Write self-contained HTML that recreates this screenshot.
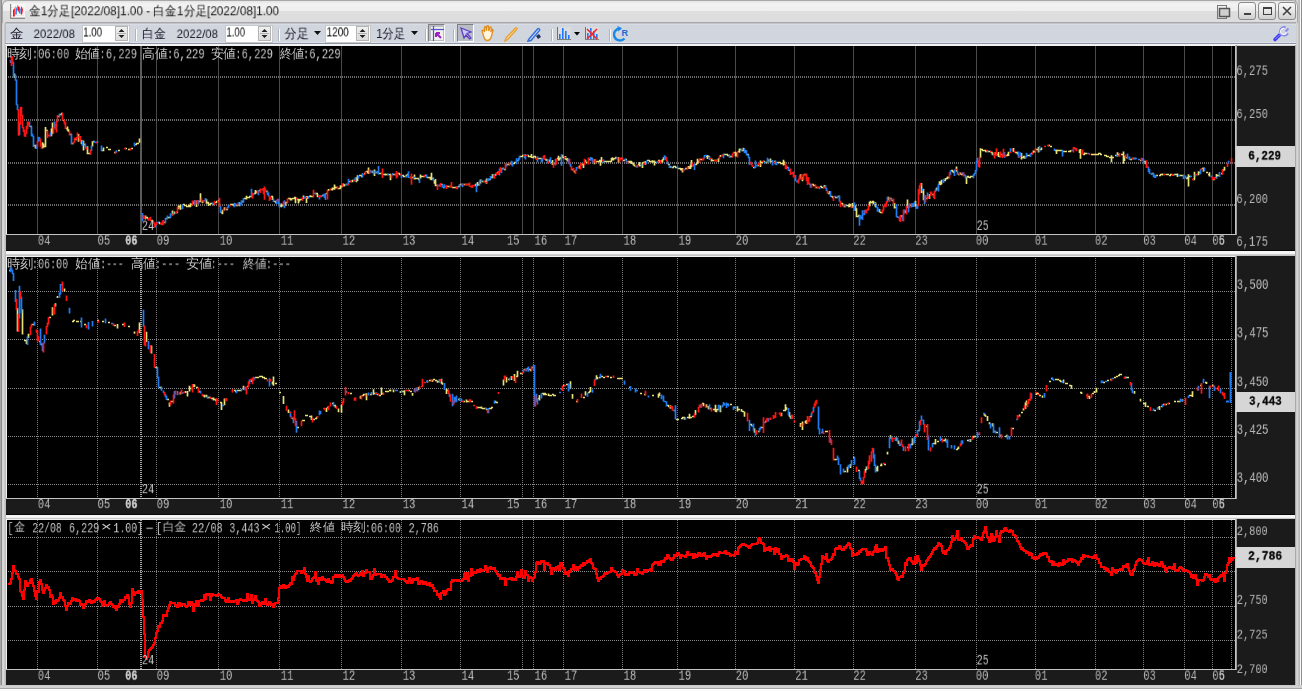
<!DOCTYPE html><html><head><meta charset="utf-8"><style>
*{margin:0;padding:0;box-sizing:border-box}
html,body{width:1302px;height:691px;overflow:hidden;background:#d6d6d6;font-family:"Liberation Sans",sans-serif}
.a{position:absolute}
.m{position:absolute;font-family:"Liberation Mono",monospace;font-size:13px;line-height:13px;white-space:pre;transform:scaleX(0.77);transform-origin:0 0;color:#c8c8c8}
.j{position:absolute;font-size:12px;line-height:12px;white-space:pre;color:#c8c8c8}
.t{position:absolute;font-size:13px;line-height:14px;white-space:pre;color:#101010}
</style></head><body>
<div class="a" style="left:0;top:0;width:1302px;height:691px;background:#d4d4d4"></div>
<div class="a" style="left:0px;top:0;width:1px;height:691px;background:#a8a8a8"></div>
<div class="a" style="left:1px;top:0;width:1px;height:691px;background:#8c8c8c"></div>
<div class="a" style="left:2px;top:0;width:1px;height:691px;background:#d4d4d4"></div>
<div class="a" style="left:3px;top:0;width:1px;height:691px;background:#dadada"></div>
<div class="a" style="left:4px;top:0;width:1px;height:691px;background:#c8c8c8"></div>
<div class="a" style="left:5px;top:0;width:1px;height:691px;background:#bcbcbc"></div>
<div class="a" style="left:1295px;top:0;width:1px;height:691px;background:#a8a8a8"></div>
<div class="a" style="left:1296px;top:0;width:1px;height:691px;background:#d0d0d0"></div>
<div class="a" style="left:1297px;top:0;width:1px;height:691px;background:#d4d4d4"></div>
<div class="a" style="left:1298px;top:0;width:1px;height:691px;background:#c4c4c4"></div>
<div class="a" style="left:1299px;top:0;width:1px;height:691px;background:#b8b8b8"></div>
<div class="a" style="left:1300px;top:0;width:1px;height:691px;background:#fafafa"></div>
<div class="a" style="left:1301px;top:0;width:1px;height:691px;background:#8c8c8c"></div>
<div class="a" style="left:0;top:685px;width:1302px;height:1px;background:#c8c8c8"></div>
<div class="a" style="left:0;top:686px;width:1302px;height:1px;background:#d2d2d2"></div>
<div class="a" style="left:0;top:687px;width:1302px;height:1px;background:#d0d0d0"></div>
<div class="a" style="left:0;top:688px;width:1302px;height:1px;background:#a4a4a4"></div>
<div class="a" style="left:0;top:689px;width:1302px;height:1px;background:#fbfbfb"></div>
<div class="a" style="left:0;top:690px;width:1302px;height:1px;background:#fbfbfb"></div>
<div class="a" style="left:2px;top:0;width:1296px;height:23px;background:linear-gradient(#e4e4e4 0px,#f2f2f2 3px,#efefef 9.5px,#dedede 10.5px,#dcdcdc 22px);border-top-left-radius:6px;border-top-right-radius:6px;border:1px solid #a8a8a8;border-bottom:none"></div>
<svg class="a" style="left:10px;top:4px" width="15" height="15" viewBox="0 0 15 15">
<rect x="0" y="0" width="15" height="14" fill="#f8f8f8"/>
<rect x="1" y="3" width="13" height="0.6" fill="#d8e0e8"/><rect x="1" y="7" width="13" height="0.6" fill="#d8e0e8"/><rect x="1" y="11" width="13" height="0.6" fill="#d8e0e8"/>
<rect x="0" y="0" width="1.2" height="15" fill="#8a8a8a"/><rect x="0" y="13.6" width="15" height="1.4" fill="#8a8a8a"/>
<path d="M3 12.5 L3 6 L4.8 4 L4.8 12.5Z" fill="#ff1010"/><path d="M5.2 10.5 L5.6 2 L7 4.5 L6.8 10.5Z" fill="#1f7fff"/>
<path d="M7.2 6 L7.6 0.8 L9.2 3.5 L9 8Z" fill="#ff1010"/><path d="M8.8 9 L9.2 2.5 L10.8 5 L10.4 10Z" fill="#1f7fff"/>
<path d="M10.8 10.5 L11.2 2 L13 5.5 L12.2 10.5Z" fill="#ff1010"/>
</svg>
<svg class="a" style="left:1215px;top:3px" width="17" height="17" viewBox="0 0 17 17">
<rect x="2.5" y="2.5" width="9" height="13" fill="none" stroke="#777" stroke-width="1"/>
<rect x="4.5" y="5.5" width="10" height="8" fill="#d0d0d0" stroke="#555" stroke-width="1.5"/>
</svg>
<div class="a" style="left:1238px;top:2px;width:18px;height:18px;border:1px solid #8a8a8a;border-radius:3px;background:linear-gradient(#fafafa,#e6e6e6 50%,#d0d0d0)"></div>
<div class="a" style="left:1258px;top:2px;width:18px;height:18px;border:1px solid #8a8a8a;border-radius:3px;background:linear-gradient(#fafafa,#e6e6e6 50%,#d0d0d0)"></div>
<div class="a" style="left:1278px;top:2px;width:18px;height:18px;border:1px solid #8a8a8a;border-radius:3px;background:linear-gradient(#fafafa,#e6e6e6 50%,#d0d0d0)"></div>
<div class="a" style="left:1244px;top:13px;width:7px;height:2px;background:#404040"></div>
<div class="a" style="left:1263px;top:7px;width:9px;height:8px;border:1.5px solid #404040;border-top-width:2.5px"></div>
<svg class="a" style="left:1281px;top:5px" width="12" height="12" viewBox="0 0 12 12"><path d="M2 2 L10 10 M10 2 L2 10" stroke="#404040" stroke-width="1.6"/></svg>
<div class="a" style="left:5px;top:22px;width:1291px;height:22px;background:linear-gradient(#a8a8a8 0px,#a8a8a8 1px,#c0c3c8 1px,#c0c3c8 2px,#d8dce4 2px,#d8dce4 3px,#d1d5dd 3px,#d1d5dd 20px,#dfe2e8 20px);border-left:1px solid #b8bcc4"></div>
<div class="a" style="left:5px;top:43px;width:1291px;height:1px;background:#8c96a6"></div>
<div class="a" style="left:5px;top:44px;width:1291px;height:1px;background:#f4f4f4"></div>
<div class="a" style="left:82px;top:25px;width:48px;height:18px;background:#fff;border:1px solid #c8c8c8"></div>
<div class="a" style="left:115px;top:26px;width:13px;height:15px;background:linear-gradient(#f0f0f0,#dcdcdc);border:1px solid #b4b4b4"></div>
<svg class="a" style="left:115px;top:26px" width="13" height="15"><path d="M3.5 6 L6.5 3 L9.5 6Z M3.5 9 L6.5 12 L9.5 9Z" fill="#202020"/><line x1="2" y1="7.5" x2="11" y2="7.5" stroke="#b0b0b0"/></svg>
<div class="a" style="left:135px;top:29px;width:2px;height:12px;background:linear-gradient(90deg,#b0b4bc 50%,#fff 50%)"></div>
<div class="a" style="left:225px;top:25px;width:48px;height:18px;background:#fff;border:1px solid #c8c8c8"></div>
<div class="a" style="left:258px;top:26px;width:13px;height:15px;background:linear-gradient(#f0f0f0,#dcdcdc);border:1px solid #b4b4b4"></div>
<svg class="a" style="left:258px;top:26px" width="13" height="15"><path d="M3.5 6 L6.5 3 L9.5 6Z M3.5 9 L6.5 12 L9.5 9Z" fill="#202020"/><line x1="2" y1="7.5" x2="11" y2="7.5" stroke="#b0b0b0"/></svg>
<div class="a" style="left:278px;top:29px;width:2px;height:12px;background:linear-gradient(90deg,#b0b4bc 50%,#fff 50%)"></div>
<svg class="a" style="left:314px;top:31px" width="7" height="5"><path d="M0 0 L7 0 L3.5 4Z" fill="#101010"/></svg>
<div class="a" style="left:325px;top:25px;width:46px;height:18px;background:#fff;border:1px solid #c8c8c8"></div>
<div class="a" style="left:356px;top:26px;width:13px;height:15px;background:linear-gradient(#f0f0f0,#dcdcdc);border:1px solid #b4b4b4"></div>
<svg class="a" style="left:356px;top:26px" width="13" height="15"><path d="M3.5 6 L6.5 3 L9.5 6Z M3.5 9 L6.5 12 L9.5 9Z" fill="#202020"/><line x1="2" y1="7.5" x2="11" y2="7.5" stroke="#b0b0b0"/></svg>
<svg class="a" style="left:411px;top:31px" width="7" height="5"><path d="M0 0 L7 0 L3.5 4Z" fill="#101010"/></svg>
<div class="a" style="left:425px;top:29px;width:2px;height:12px;background:linear-gradient(90deg,#b0b4bc 50%,#fff 50%)"></div>
<div class="a" style="left:428px;top:24px;width:17px;height:18px;background:#b8bcc4;border-top:1px solid #808080;border-left:1px solid #808080;border-bottom:1px solid #fff;border-right:1px solid #fff"></div>
<svg class="a" style="left:430px;top:26px" width="14" height="15" viewBox="0 0 14 15">
<rect x="1" y="1" width="12" height="13" fill="#f0f0f0"/>
<line x1="3.5" y1="0" x2="3.5" y2="15" stroke="#5050d0" stroke-width="1.2"/><line x1="1" y1="3.5" x2="14" y2="3.5" stroke="#5050d0" stroke-width="1.2"/>
<path d="M6 7 L11 12 M6 7 L6 11 M6 7 L10 7" stroke="#a020c0" stroke-width="2"/>
</svg>
<div class="a" style="left:453px;top:29px;width:2px;height:12px;background:linear-gradient(90deg,#b0b4bc 50%,#fff 50%)"></div>
<div class="a" style="left:457px;top:24px;width:17px;height:18px;background:#b8bcc4;border-top:1px solid #808080;border-left:1px solid #808080;border-bottom:1px solid #fff;border-right:1px solid #fff"></div>
<svg class="a" style="left:459px;top:26px" width="14" height="15" viewBox="0 0 14 15">
<path d="M2 2 L12 6 L8 7.5 L12 12 L10.5 13 L7 9 L5 12Z" fill="#c8c8f8" stroke="#6040c0" stroke-width="1.3"/>
</svg>
<svg class="a" style="left:480px;top:25px" width="15" height="17" viewBox="0 0 15 17">
<path d="M3 9 L2 6 C2 5 3.5 5 4 6 L4.5 7 L4.5 2.5 C4.5 1.5 6 1.5 6 2.5 L6.5 6 L7 1.5 C7 0.5 8.5 0.5 8.5 1.5 L8.8 6 L9.8 2.5 C10 1.5 11.5 1.8 11.3 3 L10.8 7 L11.8 5 C12.3 4 13.5 4.5 13 5.5 L11.5 11 C11 13.5 9.5 15.5 7 15.5 C5 15.5 4 13.5 3 9Z" fill="#fff4e0" stroke="#e09020" stroke-width="1.3"/>
</svg>
<svg class="a" style="left:503px;top:25px" width="16" height="17" viewBox="0 0 16 17">
<path d="M3 13 L12.5 3 C13.2 2.3 14.5 3.3 13.8 4.2 L4.5 14.5 L2 16Z" fill="#fff0c0" stroke="#e8a030" stroke-width="1.4"/>
</svg>
<svg class="a" style="left:527px;top:25px" width="15" height="17" viewBox="0 0 15 17">
<path d="M2 14 L10.5 4 C11.3 3 13.2 4.2 12.5 5.4 L4 15.5 L1 16Z" fill="#c8dcff" stroke="#3a70d8" stroke-width="1.5"/>
<path d="M9 11 L12 9 L14 12 L11 14Z" fill="#203060"/>
</svg>
<div class="a" style="left:551px;top:29px;width:2px;height:12px;background:linear-gradient(90deg,#b0b4bc 50%,#fff 50%)"></div>
<svg class="a" style="left:557px;top:27px" width="14" height="13" viewBox="0 0 14 13">
<rect x="0" y="0" width="14" height="13" fill="#dcdcdc"/><rect x="0" y="0" width="1" height="13" fill="#707070"/><rect x="0" y="12" width="14" height="1" fill="#808080"/>
<rect x="2" y="7" width="1.6" height="5" fill="#1e78ff"/><rect x="5" y="1" width="1.6" height="11" fill="#1e78ff"/><rect x="8" y="4" width="1.6" height="8" fill="#1e78ff"/><rect x="11" y="8" width="1.6" height="4" fill="#1e78ff"/>
</svg>
<svg class="a" style="left:574px;top:32px" width="6" height="4"><path d="M0 0 L6 0 L3 3.5Z" fill="#000"/></svg>
<svg class="a" style="left:585px;top:27px" width="14" height="13" viewBox="0 0 14 13">
<rect x="0" y="0" width="14" height="13" fill="#dcdcdc"/><rect x="0" y="0" width="1" height="13" fill="#707070"/><rect x="0" y="12" width="14" height="1" fill="#808080"/>
<rect x="2" y="6" width="1.6" height="6" fill="#1e78ff"/><rect x="5" y="1" width="1.6" height="11" fill="#1e78ff"/><rect x="8" y="4" width="1.6" height="8" fill="#1e78ff"/><rect x="11" y="7" width="1.6" height="5" fill="#1e78ff"/>
<path d="M2 2 L12 12 M12 2 L2 12" stroke="#ff2020" stroke-width="1.5"/>
</svg>
<div class="a" style="left:609px;top:29px;width:2px;height:12px;background:linear-gradient(90deg,#b0b4bc 50%,#fff 50%)"></div>
<svg class="a" style="left:613px;top:25px" width="16" height="17" viewBox="0 0 16 17">
<path d="M7.5 3.5 A6 6 0 1 0 11.5 13.5" fill="none" stroke="#1a8ae8" stroke-width="2.4"/>
<path d="M4.5 1 L9 3.5 L5 6.5Z" fill="#1a8ae8"/>
<text x="8.5" y="11" font-family="Liberation Sans" font-weight="bold" font-size="9" fill="#1a6ad8">R</text>
</svg>
<svg class="a" style="left:1272px;top:22px" width="22" height="22" viewBox="0 0 22 22">
<path d="M3 17.5 L8 12.5" stroke="#3a3af0" stroke-width="3.4" stroke-linecap="round"/>
<path d="M3.5 17 L7.5 13" stroke="#9a9aff" stroke-width="1" stroke-linecap="round"/>
<path d="M8 12.5 L9.5 11" stroke="#f0f0ff" stroke-width="2.6"/>
<path d="M13.5 5.5 A4 4 0 1 0 15.8 11.2" fill="none" stroke="#8a8ae6" stroke-width="2.4"/>
<path d="M12.5 6.5 A3 3 0 1 0 14.5 10.5" fill="none" stroke="#ffffff" stroke-width="1.2"/>
<path d="M13.5 9.5 L16.5 6.5" stroke="#8a8ae6" stroke-width="1.8"/>
</svg>
<div class="a" style="left:6px;top:46px;width:1289px;height:204px;background:#1b1b1b"></div>
<div class="a" style="left:6px;top:45px;width:1229px;height:1px;background:#f0f0f0"></div>
<div class="a" style="left:6px;top:45px;width:1px;height:189px;background:#f0f0f0"></div>
<div class="a" style="left:7px;top:46px;width:1228px;height:188px;background:#000"></div>
<div class="a" style="left:6px;top:234px;width:1230px;height:1px;background:#c4c4c4"></div>
<div class="a" style="left:1235px;top:45px;width:1px;height:190px;background:#c4c4c4"></div>
<div class="a" style="left:1236px;top:45px;width:1px;height:190px;background:#9c9c9c"></div>
<div class="a" style="left:6px;top:256px;width:1289px;height:258px;background:#1b1b1b"></div>
<div class="a" style="left:6px;top:256px;width:1229px;height:1px;background:#f0f0f0"></div>
<div class="a" style="left:6px;top:256px;width:1px;height:242px;background:#f0f0f0"></div>
<div class="a" style="left:7px;top:257px;width:1228px;height:241px;background:#000"></div>
<div class="a" style="left:6px;top:498px;width:1230px;height:1px;background:#c4c4c4"></div>
<div class="a" style="left:1235px;top:256px;width:1px;height:243px;background:#c4c4c4"></div>
<div class="a" style="left:1236px;top:256px;width:1px;height:243px;background:#9c9c9c"></div>
<div class="a" style="left:6px;top:519px;width:1289px;height:166px;background:#1b1b1b"></div>
<div class="a" style="left:6px;top:519px;width:1229px;height:1px;background:#f0f0f0"></div>
<div class="a" style="left:6px;top:519px;width:1px;height:150px;background:#f0f0f0"></div>
<div class="a" style="left:7px;top:520px;width:1228px;height:149px;background:#000"></div>
<div class="a" style="left:6px;top:669px;width:1230px;height:1px;background:#c4c4c4"></div>
<div class="a" style="left:1235px;top:519px;width:1px;height:151px;background:#c4c4c4"></div>
<div class="a" style="left:1236px;top:519px;width:1px;height:151px;background:#9c9c9c"></div>
<div class="a" style="left:6px;top:250px;width:1289px;height:1px;background:#080808"></div>
<div class="a" style="left:6px;top:251px;width:1289px;height:1px;background:#f4f4f4"></div>
<div class="a" style="left:6px;top:252px;width:1289px;height:1px;background:#f6f6f6"></div>
<div class="a" style="left:6px;top:253px;width:1289px;height:1px;background:#f4f4f4"></div>
<div class="a" style="left:6px;top:254px;width:1289px;height:1px;background:#d0d0d0"></div>
<div class="a" style="left:6px;top:255px;width:1289px;height:1px;background:#c4c4c4"></div>
<div class="a" style="left:6px;top:514px;width:1289px;height:1px;background:#080808"></div>
<div class="a" style="left:6px;top:515px;width:1289px;height:1px;background:#f4f4f4"></div>
<div class="a" style="left:6px;top:516px;width:1289px;height:1px;background:#f6f6f6"></div>
<div class="a" style="left:6px;top:517px;width:1289px;height:1px;background:#f0f0f0"></div>
<div class="a" style="left:6px;top:518px;width:1289px;height:1px;background:#c8c8c8"></div>
<svg class="a" style="left:0;top:0" width="1302" height="691" viewBox="0 0 1302 691"><defs><filter id="by" x="-2%" y="-10%" width="104%" height="120%"><feGaussianBlur stdDeviation="0 0.8"/></filter></defs><g stroke="#4a4a4a" stroke-width="1" shape-rendering="crispEdges"><line x1="37.5" y1="46" x2="37.5" y2="234" stroke-dashoffset="0"/><line x1="97.5" y1="46" x2="97.5" y2="234" stroke-dashoffset="0"/><line x1="156.5" y1="46" x2="156.5" y2="234" stroke-dashoffset="0"/><line x1="218.5" y1="46" x2="218.5" y2="234" stroke-dashoffset="0"/><line x1="279.5" y1="46" x2="279.5" y2="234" stroke-dashoffset="0"/><line x1="341.5" y1="46" x2="341.5" y2="234" stroke-dashoffset="0"/><line x1="401.5" y1="46" x2="401.5" y2="234" stroke-dashoffset="0"/><line x1="460.5" y1="46" x2="460.5" y2="234" stroke-dashoffset="0"/><line x1="522.5" y1="46" x2="522.5" y2="234" stroke-dashoffset="0"/><line x1="533.5" y1="46" x2="533.5" y2="234" stroke-dashoffset="0"/><line x1="563.5" y1="46" x2="563.5" y2="234" stroke-dashoffset="0"/><line x1="622.5" y1="46" x2="622.5" y2="234" stroke-dashoffset="0"/><line x1="677.5" y1="46" x2="677.5" y2="234" stroke-dashoffset="0"/><line x1="735.5" y1="46" x2="735.5" y2="234" stroke-dashoffset="0"/><line x1="794.5" y1="46" x2="794.5" y2="234" stroke-dashoffset="0"/><line x1="853.5" y1="46" x2="853.5" y2="234" stroke-dashoffset="0"/><line x1="915.5" y1="46" x2="915.5" y2="234" stroke-dashoffset="0"/><line x1="976.5" y1="46" x2="976.5" y2="234" stroke-dashoffset="0"/><line x1="1035.5" y1="46" x2="1035.5" y2="234" stroke-dashoffset="0"/><line x1="1095.5" y1="46" x2="1095.5" y2="234" stroke-dashoffset="0"/><line x1="1143.5" y1="46" x2="1143.5" y2="234" stroke-dashoffset="0"/><line x1="1184.5" y1="46" x2="1184.5" y2="234" stroke-dashoffset="0"/><line x1="1212.5" y1="46" x2="1212.5" y2="234" stroke-dashoffset="0"/><line x1="1231.5" y1="46" x2="1231.5" y2="234" stroke-dashoffset="0"/></g><g stroke="#5a5a5a" stroke-width="1" shape-rendering="crispEdges"><line x1="140.5" y1="46" x2="140.5" y2="234" stroke-dashoffset="0"/><line x1="141.5" y1="46" x2="141.5" y2="234" stroke-dashoffset="0"/></g><g stroke="#6c6c6c" stroke-width="2" stroke-dasharray="1 1" stroke-dashoffset="1" shape-rendering="crispEdges"><line x1="7" y1="77" x2="1235" y2="77"/><line x1="7" y1="120" x2="1235" y2="120"/><line x1="7" y1="163" x2="1235" y2="163"/><line x1="7" y1="205" x2="1235" y2="205"/></g><path d="M14.5 73.6V77.9M30 126.5h2M34 145.5h2M35.5 145.5V148.6M42.5 142.3V148.6M43.5 143.4V147.8M44 146.5h2M45.5 127.0V147.2M46 130.5h2M51.5 128.5V136.3M52.5 122.4V133.7M58 116.5h2M60 114.5h2M61 113.5h2M63 120.5h2M66 128.5h2M67.5 126.4V130.8M68.5 129.2V131.9M70 134.5h2M72 143.5h2M75 139.5h2M78.5 133.9V141.7M81.5 140.0V144.3M83.5 140.5V150.6M84 144.5h2M87.5 146.3V154.3M88 153.5h2M89 153.5h2M92.5 141.3V146.4M93 141.5h2M102 150.5h2M103.5 147.5V151.3M106 147.5h2M108 149.5h2M109 149.5h2M114 152.5h2M118 150.5h2M125 148.5h2M128 149.5h2M131 148.5h2M135 144.5h2M136 143.5h2M137 143.5h2M139.5 138.5V142.7M145.5 215.6V219.5M146 217.5h2M147 218.5h2M151 220.5h2M152 221.5h2M158 222.5h2M159 223.5h2M164 222.5h2M166 218.5h2M168 217.5h2M169 217.5h2M172.5 210.4V215.4M174.5 211.6V214.2M176 212.5h2M178.5 205.6V209.2M179 206.5h2M180.5 204.5V209.8M183 204.5h2M184 205.5h2M185 205.5h2M186 206.5h2M187 206.5h2M188 205.5h2M189 206.5h2M190.5 203.3V206.9M191 204.5h2M193.5 201.6V204.3M196.5 200.8V207.0M199 201.5h2M200.5 193.3V201.7M202.5 200.7V203.3M206.5 199.3V203.7M207 202.5h2M208.5 202.6V206.1M209 204.5h2M210 203.5h2M211 203.5h2M213 204.5h2M215 202.5h2M216 201.5h2M218 200.5h2M221 212.5h2M222.5 209.7V214.3M224.5 207.3V210.5M226 209.5h2M230 204.5h2M231 204.5h2M232 204.5h2M233 205.5h2M236 205.5h2M239.5 202.2V206.3M242 201.5h2M244 198.5h2M245 198.5h2M246.5 195.8V199.6M247 197.5h2M248 197.5h2M249 196.5h2M250 196.5h2M254 193.5h2M255.5 189.9V194.3M256.5 190.7V192.9M259 190.5h2M262 189.5h2M266 191.5h2M271 196.5h2M272.5 196.3V200.1M274 201.5h2M275 202.5h2M280.5 204.8V206.9M281.5 203.6V207.3M282 205.5h2M285.5 201.8V205.7M286 202.5h2M288 198.5h2M289 198.5h2M290.5 198.0V200.4M291.5 198.3V200.4M292 198.5h2M293 198.5h2M294 197.5h2M295.5 197.1V203.3M297 199.5h2M298.5 198.8V203.4M299.5 198.7V201.5M300 199.5h2M301 199.5h2M303.5 195.4V198.9M306.5 196.0V203.0M307.5 196.0V198.7M309 196.5h2M310.5 195.2V197.2M311 196.5h2M312 196.5h2M315 193.5h2M316 193.5h2M317.5 193.9V197.3M322 195.5h2M326 193.5h2M328.5 188.9V191.1M330 189.5h2M331 189.5h2M332.5 187.4V190.5M333 188.5h2M334.5 184.6V189.7M335.5 186.5V188.4M336 187.5h2M338 188.5h2M339 188.5h2M340.5 185.3V188.5M341 186.5h2M343.5 183.6V186.2M344.5 184.2V186.5M346 184.5h2M349 181.5h2M351 181.5h2M352.5 179.7V182.2M356.5 177.2V182.2M357.5 175.3V180.9M359 175.5h2M360 175.5h2M361 176.5h2M364 173.5h2M366 171.5h2M367 172.5h2M368.5 167.4V174.0M372.5 170.8V173.0M374.5 169.5V176.0M376 172.5h2M379 173.5h2M380 173.5h2M383 174.5h2M384 174.5h2M385.5 173.6V175.6M386 174.5h2M388 174.5h2M389 174.5h2M390.5 174.4V180.3M393 174.5h2M394 174.5h2M398 173.5h2M399 174.5h2M402 175.5h2M403 176.5h2M404 176.5h2M406.5 174.4V177.3M407 174.5h2M410 177.5h2M412 177.5h2M414.5 174.4V179.6M415 178.5h2M416 178.5h2M417 178.5h2M418 179.5h2M420.5 174.6V178.4M421 176.5h2M422 176.5h2M423 176.5h2M425 175.5h2M427 177.5h2M428 177.5h2M429 177.5h2M430.5 177.6V179.8M431.5 172.7V180.3M432 178.5h2M434.5 179.9V183.8M435.5 179.0V186.3M436 185.5h2M439 185.5h2M441 184.5h2M443 187.5h2M447 186.5h2M448 186.5h2M450 186.5h2M452 187.5h2M453 187.5h2M454 187.5h2M455 187.5h2M458 186.5h2M460 184.5h2M464 184.5h2M466 184.5h2M468 184.5h2M471 186.5h2M474 185.5h2M475 184.5h2M477.5 182.1V186.3M478 184.5h2M480.5 179.6V183.6M482 181.5h2M484 181.5h2M486.5 178.6V183.7M489 179.5h2M491 177.5h2M492.5 174.1V177.6M495.5 173.7V176.0M497 172.5h2M502 168.5h2M504 169.5h2M507 164.5h2M508 164.5h2M510 163.5h2M513 163.5h2M514 162.5h2M515 162.5h2M517 160.5h2M520 156.5h2M521 156.5h2M522 155.5h2M527 155.5h2M528 156.5h2M529 156.5h2M530 156.5h2M531.5 153.9V158.0M532 157.5h2M533 156.5h2M534 156.5h2M535.5 156.5V158.4M538 158.5h2M539 158.5h2M540 158.5h2M545 159.5h2M546.5 158.7V161.1M549.5 159.4V162.4M551 162.5h2M552.5 160.1V165.1M554 163.5h2M557 158.5h2M558.5 155.8V160.7M559.5 158.2V160.5M560.5 157.1V159.2M562.5 154.8V158.3M563 157.5h2M565.5 156.0V159.8M566 159.5h2M567.5 158.1V161.5M572 169.5h2M574.5 170.3V172.4M578 167.5h2M579.5 165.5V168.4M582 164.5h2M583.5 163.6V168.0M585.5 159.8V162.6M586 162.5h2M589 159.5h2M591 158.5h2M594.5 159.3V164.2M596 161.5h2M597 161.5h2M598 161.5h2M599 160.5h2M600.5 160.5V165.7M601.5 156.9V162.5M604 161.5h2M605 161.5h2M606 161.5h2M607 161.5h2M608 161.5h2M609 161.5h2M610 161.5h2M611.5 157.9V161.3M612.5 157.3V160.3M613.5 158.0V160.5M614 158.5h2M615 157.5h2M618.5 157.0V162.8M621 158.5h2M623 160.5h2M625 159.5h2M628 161.5h2M629 162.5h2M630 161.5h2M631.5 161.1V163.9M632 163.5h2M633.5 162.4V165.5M634.5 164.5V166.6M636 166.5h2M638 164.5h2M639.5 162.0V166.5M640 165.5h2M642.5 162.3V168.1M643 162.5h2M645.5 161.1V164.8M647 160.5h2M648 160.5h2M649 161.5h2M650 161.5h2M651 161.5h2M652.5 160.3V162.8M653 161.5h2M654.5 160.6V165.6M655 162.5h2M658 160.5h2M659.5 160.1V162.7M661.5 159.9V162.5M662.5 159.2V162.5M663.5 157.3V160.2M668 164.5h2M670.5 166.0V168.1M672 167.5h2M673 166.5h2M674 166.5h2M675 167.5h2M676 167.5h2M678 168.5h2M679 168.5h2M680 169.5h2M681.5 168.1V170.4M682.5 168.1V172.5M685 168.5h2M686 168.5h2M688.5 166.0V168.8M689.5 166.3V168.9M690.5 164.6V168.9M691.5 160.1V167.3M695 164.5h2M696 163.5h2M697.5 158.8V163.9M698.5 160.6V163.0M700 159.5h2M701 159.5h2M706 156.5h2M707.5 155.0V159.1M708 156.5h2M711.5 158.0V161.6M712 160.5h2M713 160.5h2M715 160.5h2M717 160.5h2M718.5 158.3V162.1M720.5 155.0V157.1M722 155.5h2M724 154.5h2M725 154.5h2M726 154.5h2M727 155.5h2M728 155.5h2M730 156.5h2M731 156.5h2M734 152.5h2M735.5 152.3V156.4M736.5 152.2V156.4M738 151.5h2M739.5 148.4V152.7M740 149.5h2M742 150.5h2M743.5 147.8V150.7M745.5 150.3V152.7M747 154.5h2M753 167.5h2M757 165.5h2M760.5 160.6V166.9M761 162.5h2M763 161.5h2M765 162.5h2M766 162.5h2M768.5 159.4V161.6M770.5 158.5V162.6M771 161.5h2M774 161.5h2M777 162.5h2M778 162.5h2M779 162.5h2M780 163.5h2M781 163.5h2M782 163.5h2M783.5 159.7V165.6M784.5 161.4V165.0M787 167.5h2M789 170.5h2M797 181.5h2M800.5 174.2V178.7M802.5 176.9V181.2M804 174.5h2M812 184.5h2M813 185.5h2M814 185.5h2M816 187.5h2M820 186.5h2M821 187.5h2M822 187.5h2M824.5 185.0V188.0M828 193.5h2M829.5 190.9V193.4M831 196.5h2M832 197.5h2M835 197.5h2M836 197.5h2M838 196.5h2M841 203.5h2M842 204.5h2M844 206.5h2M846 205.5h2M847 205.5h2M848 206.5h2M849.5 203.6V206.8M850.5 204.3V206.8M852.5 203.1V207.7M853 205.5h2M855.5 205.3V211.1M856.5 208.3V217.3M857 216.5h2M858 215.5h2M861 217.5h2M869.5 201.8V206.4M870.5 200.8V203.6M871 202.5h2M872 201.5h2M873.5 201.0V204.2M875.5 202.3V207.2M879.5 209.0V212.6M880 212.5h2M881 212.5h2M888.5 196.7V200.2M890 198.5h2M892 200.5h2M894.5 203.1V208.6M895 207.5h2M901.5 215.0V217.3M905.5 210.2V213.0M907.5 199.5V207.9M910 205.5h2M915.5 200.8V207.0M921.5 182.9V193.1M923.5 188.9V200.3M926 198.5h2M929.5 193.9V198.9M932 194.5h2M936.5 187.7V190.5M939.5 181.3V184.9M940.5 181.5V185.3M941.5 179.7V184.4M944 180.5h2M945.5 178.0V180.2M946 178.5h2M947.5 176.6V179.3M948 177.5h2M951 170.5h2M952.5 170.1V172.1M953.5 171.0V173.3M956.5 166.4V171.7M958 174.5h2M960.5 172.4V174.7M961 174.5h2M966.5 176.5V184.1M967 176.5h2M968.5 176.0V178.1M969 177.5h2M970 176.5h2M971 176.5h2M972 176.5h2M980.5 148.2V157.7M981 149.5h2M982 150.5h2M983 150.5h2M984 150.5h2M985 151.5h2M988 151.5h2M989 151.5h2M991.5 151.3V153.3M992.5 152.3V155.3M995.5 152.3V155.3M997 154.5h2M998.5 152.0V157.1M999 156.5h2M1001 154.5h2M1006 155.5h2M1007 154.5h2M1008.5 151.7V156.0M1012 149.5h2M1013.5 148.1V151.9M1015 152.5h2M1016 152.5h2M1017.5 151.9V154.6M1021.5 153.0V159.5M1022 157.5h2M1023 156.5h2M1024.5 156.1V158.8M1027 155.5h2M1028 155.5h2M1029 155.5h2M1031 153.5h2M1033.5 150.6V153.1M1034 151.5h2M1036 149.5h2M1037 149.5h2M1038.5 147.0V152.5M1040 149.5h2M1041.5 147.5V149.8M1048 145.5h2M1050 146.5h2M1055 150.5h2M1056.5 149.5V154.1M1057 150.5h2M1058 150.5h2M1060 150.5h2M1063 151.5h2M1065 151.5h2M1068 151.5h2M1070.5 150.0V152.3M1079.5 149.6V153.0M1080.5 149.1V158.7M1083 154.5h2M1084.5 152.4V154.6M1085 153.5h2M1091 154.5h2M1092 154.5h2M1093 154.5h2M1094 154.5h2M1095 154.5h2M1096 154.5h2M1097 154.5h2M1098 153.5h2M1099 153.5h2M1100 154.5h2M1104 155.5h2M1105 155.5h2M1106 156.5h2M1107 156.5h2M1109 157.5h2M1111.5 155.2V162.3M1112 157.5h2M1115 155.5h2M1117.5 152.2V156.4M1118 154.5h2M1121 154.5h2M1123.5 151.6V163.8M1124.5 155.9V160.9M1126 157.5h2M1130 159.5h2M1132 158.5h2M1134 158.5h2M1140 160.5h2M1144 161.5h2M1145.5 160.9V164.2M1152 173.5h2M1156 175.5h2M1159 175.5h2M1160 174.5h2M1161 174.5h2M1162.5 173.4V175.4M1166 174.5h2M1167 174.5h2M1169 175.5h2M1170 174.5h2M1174 174.5h2M1175 174.5h2M1176 174.5h2M1177.5 173.5V177.0M1179 175.5h2M1180 175.5h2M1181 175.5h2M1182 175.5h2M1186 178.5h2M1187.5 176.7V179.1M1188.5 174.2V186.4M1189 176.5h2M1193 179.5h2M1194.5 171.8V179.4M1197 174.5h2M1198.5 171.3V175.3M1199 172.5h2M1202 168.5h2M1203.5 167.4V171.7M1206 172.5h2M1208 174.5h2M1209.5 172.2V176.6M1213 179.5h2M1216.5 174.0V178.5M1217 175.5h2M1218 175.5h2M1221 173.5h2M1223.5 169.3V171.3M1224.5 166.7V170.4" stroke="#e8e078" stroke-width="1.7" fill="none"/><path d="M10.5 60.0V63.0M13.5 61.7V76.4M15.5 74.4V80.8M16.5 79.6V105.3M17.5 104.3V110.3M19.5 122.0V135.2M29.5 121.4V126.9M31.5 126.2V136.2M32.5 133.7V136.8M33.5 135.8V147.1M36.5 144.6V149.0M38.5 136.7V142.1M39.5 137.0V140.9M50.5 132.5V136.4M54.5 121.4V128.3M59.5 113.6V117.1M71.5 133.8V144.4M82.5 141.1V145.9M85.5 143.7V148.4M91.5 145.4V151.2M94.5 141.1V143.1M96 142.5h2M97.5 140.7V143.1M101.5 145.6V151.3M116.5 150.3V152.7M134.5 142.4V146.5M142.5 212.9V221.2M149 218.5h2M155.5 224.1V227.6M157 222.5h2M165.5 217.8V223.1M167.5 215.6V219.1M170.5 213.3V218.0M173.5 211.7V214.6M181 208.5h2M182.5 204.7V209.2M194.5 200.1V204.5M198.5 200.0V204.0M204 200.5h2M205.5 197.9V201.5M212 203.5h2M220.5 205.9V213.1M227.5 206.8V209.4M228.5 204.5V207.8M234.5 202.8V207.2M235.5 203.3V205.9M238.5 202.2V204.6M240.5 202.8V206.1M241.5 200.3V205.1M243.5 198.0V202.8M251.5 188.8V196.6M253.5 193.0V195.6M258.5 190.0V195.2M267.5 190.5V195.0M268.5 192.5V196.5M273.5 198.4V202.1M276.5 200.0V204.1M278.5 198.7V204.0M279.5 202.7V207.4M284.5 200.3V208.2M304.5 196.4V198.6M308.5 196.0V198.4M314 193.5h2M319.5 195.3V199.6M321.5 195.1V197.2M323.5 193.8V196.2M324.5 193.8V198.0M325.5 193.1V200.1M345 184.5h2M348.5 178.7V185.3M354.5 178.5V181.6M355.5 177.2V181.4M358.5 175.5V178.4M362.5 172.9V177.4M370.5 170.1V172.7M371.5 170.7V172.7M373.5 170.8V174.4M375.5 170.6V173.6M377.5 171.2V173.3M378.5 166.1V174.5M387 174.5h2M392.5 172.9V175.6M401.5 174.2V177.9M405 176.5h2M408.5 171.3V177.9M413 177.5h2M419.5 177.4V183.1M426.5 174.6V178.1M433.5 177.6V180.9M438 185.5h2M442.5 184.2V187.8M444.5 184.2V188.1M457.5 185.9V189.3M459.5 183.9V186.4M461 184.5h2M462.5 183.4V187.3M476.5 184.2V192.3M479.5 180.6V185.8M481.5 179.5V182.1M487.5 178.3V181.5M488.5 178.3V181.1M490.5 175.9V179.8M493.5 174.1V178.3M499.5 168.6V175.5M501.5 168.0V173.1M503.5 167.7V169.8M506.5 164.0V166.8M511.5 160.8V165.3M512.5 161.6V166.5M516.5 158.2V164.2M518.5 157.7V161.3M519.5 155.7V159.8M524.5 154.2V158.3M525.5 153.9V159.6M537.5 156.3V162.3M541.5 158.4V162.6M542.5 157.9V161.7M547.5 158.9V163.5M550.5 157.2V163.6M555.5 158.8V165.5M561.5 154.2V165.7M568.5 158.4V163.9M570.5 163.2V166.9M576.5 166.9V170.8M590.5 156.9V160.7M592.5 158.1V162.7M603.5 159.4V163.1M616.5 157.3V159.3M624 159.5h2M626.5 159.7V163.6M635 166.5h2M641.5 164.1V166.3M646.5 160.5V163.9M656 162.5h2M664.5 155.2V159.3M665.5 156.0V160.0M667.5 160.5V164.6M669.5 164.5V168.1M671.5 166.0V168.3M677.5 166.6V168.8M684 169.5h2M693.5 164.0V166.4M694.5 163.9V169.9M704.5 155.0V158.5M705 155.5h2M709.5 156.3V160.0M723.5 153.5V158.3M729.5 154.5V158.1M741.5 148.7V151.5M744.5 148.3V153.2M746.5 150.3V155.6M748.5 154.4V158.2M749.5 157.1V165.0M754 167.5h2M755.5 160.6V168.1M756 165.5h2M764 162.5h2M767.5 157.8V163.0M769.5 159.4V161.3M772.5 160.1V165.5M775.5 160.6V164.7M776.5 162.0V165.2M788.5 167.1V171.1M791 173.5h2M795.5 174.9V181.2M796 181.5h2M809.5 182.6V185.0M810.5 184.0V187.8M819.5 186.6V189.3M825.5 185.0V188.7M826.5 187.7V191.2M830.5 190.9V197.1M834 196.5h2M837.5 195.7V198.1M839.5 195.4V201.7M845.5 203.9V206.9M854.5 202.4V210.8M859.5 215.3V225.8M860.5 215.0V219.2M862.5 210.3V220.0M863 214.5h2M864.5 210.0V215.2M867 209.5h2M874 203.5h2M876.5 204.9V208.1M877.5 207.1V211.8M878.5 208.6V211.4M887.5 196.7V202.4M891.5 197.9V200.9M896.5 204.1V217.2M897.5 216.0V218.1M898 217.5h2M902.5 215.2V220.9M904.5 209.4V213.7M908.5 204.5V212.5M911.5 203.2V207.5M912.5 203.2V207.1M913.5 202.9V207.1M914.5 201.8V203.9M916.5 206.0V208.9M917.5 204.3V208.7M922.5 188.3V190.9M924.5 195.1V204.1M927.5 192.4V199.0M935.5 189.5V192.3M937.5 186.6V190.2M938.5 183.8V191.4M942 181.5h2M943.5 178.8V182.9M950.5 170.3V175.3M954.5 169.5V176.1M957.5 170.7V174.7M962.5 172.3V174.5M964.5 173.7V176.0M965.5 175.0V178.6M973.5 174.2V178.2M974.5 173.1V175.7M975.5 170.1V174.1M976.5 160.7V171.1M977.5 157.8V163.4M987.5 150.1V152.5M993.5 153.3V155.3M1004.5 152.1V157.8M1010.5 148.2V152.6M1018.5 151.4V157.8M1020.5 152.2V156.7M1025.5 156.6V158.8M1026.5 152.8V157.6M1030.5 153.2V156.9M1039.5 146.1V151.9M1054.5 148.4V151.1M1062.5 149.7V156.4M1071 150.5h2M1072 150.5h2M1075.5 147.9V150.1M1087 153.5h2M1116 155.5h2M1127.5 153.4V158.8M1129.5 156.5V160.1M1133 158.5h2M1135 158.5h2M1138 159.5h2M1142.5 157.9V160.9M1143.5 158.8V163.6M1148.5 166.7V172.0M1149.5 169.1V173.9M1151.5 172.7V175.1M1153.5 172.9V177.1M1154.5 174.6V178.0M1155.5 175.0V178.0M1164 174.5h2M1173.5 174.0V176.1M1178 175.5h2M1183.5 174.9V178.9M1185.5 175.5V178.5M1190 176.5h2M1195.5 174.2V176.5M1200.5 169.3V174.2M1204.5 167.6V171.2M1211.5 175.4V177.6M1215 177.5h2M1219.5 172.1V177.1M1228.5 160.8V163.8" stroke="#1e7cf0" stroke-width="1.7" fill="none"/><path d="M11.5 56.2V66.1M12.5 56.2V64.3M18.5 109.2V135.8M20.5 106.7V124.7M21.5 106.7V116.2M22.5 114.7V128.2M23.5 127.0V132.0M24.5 129.6V136.5M25.5 133.0V136.9M26.5 126.0V134.0M27.5 121.6V129.2M28.5 121.8V125.6M37.5 140.7V147.6M40.5 138.6V146.5M41.5 145.4V148.6M47.5 130.6V138.1M48 135.5h2M49.5 134.4V136.4M53.5 127.3V133.7M55.5 123.4V129.4M56.5 120.9V132.4M57.5 115.1V121.9M62.5 112.8V120.5M64.5 119.8V124.5M65.5 122.3V128.9M69.5 130.9V135.5M73.5 141.8V144.0M74.5 137.5V142.8M76.5 136.9V139.8M77.5 132.5V137.9M79.5 135.9V141.2M80.5 135.9V141.7M86.5 146.9V149.8M90.5 149.4V154.8M95 142.5h2M115.5 151.7V153.7M124 148.5h2M130.5 148.3V150.5M143.5 215.0V219.0M144.5 216.1V219.0M148.5 217.9V220.8M150.5 216.8V221.2M153.5 220.8V223.8M154.5 222.4V227.4M156.5 222.1V225.1M160 223.5h2M161 224.5h2M162.5 220.4V224.5M163.5 219.9V224.7M171 214.5h2M175 212.5h2M177.5 206.9V212.6M192.5 200.6V205.6M195.5 200.1V204.6M197.5 200.0V203.9M201.5 198.3V201.7M203.5 199.9V202.7M214.5 200.8V205.1M217 201.5h2M219.5 197.8V206.9M223.5 209.5V211.6M225.5 207.3V209.8M229 205.5h2M237.5 203.5V205.6M252.5 192.8V198.4M257.5 190.7V193.7M260.5 188.5V193.0M261 189.5h2M263.5 188.0V194.3M264.5 186.4V199.7M265.5 188.4V191.7M269.5 195.5V201.0M270.5 196.6V199.8M277.5 198.7V201.8M283.5 201.3V205.7M287.5 198.3V203.0M296 198.5h2M302.5 197.1V200.7M305 197.5h2M313.5 189.7V197.0M318 196.5h2M320.5 195.3V197.2M327.5 190.1V199.5M329 189.5h2M337.5 186.5V189.6M342.5 183.6V186.8M347 184.5h2M350 181.5h2M353 180.5h2M363 174.5h2M365.5 171.1V173.9M369.5 169.2V173.9M381 173.5h2M382.5 168.5V178.0M391.5 174.6V178.3M395.5 173.7V175.6M396.5 170.9V178.5M397.5 172.2V177.3M400 174.5h2M409 177.5h2M411.5 173.6V184.7M424.5 174.8V176.7M437.5 184.4V190.1M440.5 183.0V187.0M445 186.5h2M446.5 185.1V189.0M449 186.5h2M451.5 181.9V188.0M456.5 186.5V189.3M463.5 183.5V185.8M465 184.5h2M467 184.5h2M469.5 182.6V186.8M470 186.5h2M472.5 184.7V188.1M473 185.5h2M483 181.5h2M485 182.5h2M494.5 175.0V178.8M496.5 172.2V175.3M498.5 171.0V175.1M500.5 166.9V172.4M505.5 163.2V169.6M509.5 162.4V165.4M523 155.5h2M526 155.5h2M536.5 157.4V160.1M543.5 155.7V159.0M544.5 155.1V160.1M548.5 161.3V163.5M553.5 162.5V167.7M556.5 158.5V164.4M564 157.5h2M569.5 158.8V164.6M571.5 165.9V170.6M573.5 168.0V171.3M575.5 169.6V174.1M577 167.5h2M580.5 163.0V169.4M581.5 162.8V165.9M584.5 158.8V165.2M587 162.5h2M588.5 157.6V164.4M593.5 159.8V162.8M595.5 159.0V163.5M602 160.5h2M617.5 157.0V159.3M619.5 158.6V163.1M620.5 157.4V160.6M622.5 157.7V160.5M627.5 160.9V163.5M637.5 164.5V167.4M644.5 162.5V164.8M657 161.5h2M660.5 159.9V164.0M666.5 156.9V161.5M683.5 168.7V171.8M687.5 166.5V169.7M692.5 162.5V166.3M699.5 158.3V163.0M702 159.5h2M703.5 157.5V160.4M710 158.5h2M714 160.5h2M716 160.5h2M719.5 156.1V159.3M721 155.5h2M732.5 153.5V157.5M733.5 151.8V154.5M737.5 151.3V157.5M750 162.5h2M751.5 162.6V165.6M752.5 164.6V167.1M758.5 162.4V165.3M759.5 162.4V165.4M762 161.5h2M773 162.5h2M785.5 162.8V169.0M786.5 165.2V169.5M790.5 168.6V174.9M792.5 171.9V174.1M793.5 171.6V177.5M794.5 174.9V177.5M798.5 178.8V183.4M799.5 175.5V179.8M801.5 174.2V180.0M803.5 174.0V180.1M805.5 174.0V176.3M806.5 173.4V181.2M807.5 177.0V185.1M808.5 177.2V184.1M811.5 183.5V187.8M815.5 184.5V188.5M817 187.5h2M818.5 186.4V188.5M823 187.5h2M827.5 190.2V193.7M833.5 196.0V201.1M840.5 200.7V207.2M843.5 203.8V207.2M851.5 205.8V208.2M865.5 209.8V213.5M866.5 209.3V213.6M868.5 204.5V210.5M882.5 209.6V213.2M883.5 205.5V210.7M884.5 204.2V206.9M885.5 203.2V207.4M886.5 201.0V206.6M889.5 197.3V202.1M893.5 198.5V204.1M899.5 216.5V221.2M900.5 215.1V221.9M903.5 209.4V221.4M906.5 205.9V214.4M909.5 203.3V208.3M918.5 188.9V206.2M919.5 185.2V194.6M920.5 182.9V186.2M925.5 195.1V202.6M928.5 196.2V198.9M930.5 191.4V195.9M931.5 191.4V194.7M933.5 194.3V197.7M934.5 190.7V199.2M949.5 172.2V178.5M955 169.5h2M959.5 172.2V175.0M963.5 172.3V176.6M978.5 160.6V167.1M979.5 156.7V167.8M986 150.5h2M990 151.5h2M994.5 152.3V158.5M996.5 148.2V155.8M1000.5 151.6V157.3M1002.5 154.2V157.9M1003.5 148.7V156.9M1005.5 154.6V157.3M1009 152.5h2M1011 149.5h2M1014.5 150.8V152.8M1019.5 155.7V157.8M1032.5 151.8V154.8M1035.5 148.0V152.2M1044 146.5h2M1047 145.5h2M1073.5 147.1V152.4M1074.5 147.1V149.1M1076.5 148.0V151.2M1082.5 149.4V154.8M1089.5 153.0V154.9M1119.5 152.9V156.7M1125.5 154.5V158.0M1131 158.5h2M1141.5 157.8V161.1M1146.5 160.2V168.0M1147.5 165.7V167.7M1163 174.5h2M1172.5 173.8V176.1M1192 179.5h2M1196 174.5h2M1201.5 168.1V170.3M1212.5 176.6V180.1M1214.5 177.1V179.8M1222.5 169.3V174.7M1227.5 162.8V167.0M1231.5 157.9V163.5" stroke="#ff1414" stroke-width="1.7" fill="none"/><g stroke="#7c7c7c" stroke-width="1" stroke-dasharray="1 1" shape-rendering="crispEdges"><line x1="37.5" y1="257" x2="37.5" y2="498" stroke-dashoffset="1"/><line x1="97.5" y1="257" x2="97.5" y2="498" stroke-dashoffset="1"/><line x1="156.5" y1="257" x2="156.5" y2="498" stroke-dashoffset="1"/><line x1="218.5" y1="257" x2="218.5" y2="498" stroke-dashoffset="1"/><line x1="279.5" y1="257" x2="279.5" y2="498" stroke-dashoffset="1"/><line x1="341.5" y1="257" x2="341.5" y2="498" stroke-dashoffset="1"/><line x1="401.5" y1="257" x2="401.5" y2="498" stroke-dashoffset="1"/><line x1="460.5" y1="257" x2="460.5" y2="498" stroke-dashoffset="1"/><line x1="522.5" y1="257" x2="522.5" y2="498" stroke-dashoffset="1"/><line x1="533.5" y1="257" x2="533.5" y2="498" stroke-dashoffset="1"/><line x1="563.5" y1="257" x2="563.5" y2="498" stroke-dashoffset="1"/><line x1="622.5" y1="257" x2="622.5" y2="498" stroke-dashoffset="1"/><line x1="677.5" y1="257" x2="677.5" y2="498" stroke-dashoffset="1"/><line x1="735.5" y1="257" x2="735.5" y2="498" stroke-dashoffset="1"/><line x1="794.5" y1="257" x2="794.5" y2="498" stroke-dashoffset="1"/><line x1="853.5" y1="257" x2="853.5" y2="498" stroke-dashoffset="1"/><line x1="915.5" y1="257" x2="915.5" y2="498" stroke-dashoffset="1"/><line x1="976.5" y1="257" x2="976.5" y2="498" stroke-dashoffset="1"/><line x1="1035.5" y1="257" x2="1035.5" y2="498" stroke-dashoffset="1"/><line x1="1095.5" y1="257" x2="1095.5" y2="498" stroke-dashoffset="1"/><line x1="1143.5" y1="257" x2="1143.5" y2="498" stroke-dashoffset="1"/><line x1="1184.5" y1="257" x2="1184.5" y2="498" stroke-dashoffset="1"/><line x1="1212.5" y1="257" x2="1212.5" y2="498" stroke-dashoffset="1"/><line x1="1231.5" y1="257" x2="1231.5" y2="498" stroke-dashoffset="1"/></g><g stroke="#a4a4a4" stroke-width="1" stroke-dasharray="1 1" shape-rendering="crispEdges"><line x1="140.5" y1="257" x2="140.5" y2="498" stroke-dashoffset="1"/><line x1="141.5" y1="257" x2="141.5" y2="498" stroke-dashoffset="1"/></g><g stroke="#8c8c8c" stroke-width="1" stroke-dasharray="1 1" stroke-dashoffset="1" shape-rendering="crispEdges"><line x1="7" y1="291.5" x2="1235" y2="291.5"/><line x1="7" y1="339.5" x2="1235" y2="339.5"/><line x1="7" y1="388.5" x2="1235" y2="388.5"/><line x1="7" y1="436.5" x2="1235" y2="436.5"/><line x1="7" y1="484.5" x2="1235" y2="484.5"/></g><path d="M9 270.5h2M17.5 307.9V331.5M22.5 309.3V334.5M24 340.5h2M26.5 339.8V344.1M28.5 333.8V338.0M32 324.5h2M39 341.5h2M41 344.5h2M49 317.5h2M52.5 307.2V315.5M55.5 303.3V306.5M57.5 295.9V298.0M64.5 288.4V291.6M72 321.5h2M73 320.5h2M76 321.5h2M77 321.5h2M80 321.5h2M84 324.5h2M97 320.5h2M102 321.5h2M108 322.5h2M114 325.5h2M117.5 324.0V328.4M122 324.5h2M128 326.5h2M134.5 331.5V333.8M139.5 322.5V333.2M146.5 331.8V341.9M151.5 345.4V353.6M155 367.5h2M156 367.5h2M159 387.5h2M160 387.5h2M167 399.5h2M169.5 402.5V406.7M171 401.5h2M180.5 391.8V394.6M185.5 391.0V393.0M187.5 391.0V396.6M189.5 385.8V391.6M190 388.5h2M193.5 383.9V387.3M194.5 384.6V387.0M196 387.5h2M199 391.5h2M203 395.5h2M204.5 394.8V397.5M206.5 394.7V397.2M208 397.5h2M209 397.5h2M211 398.5h2M212 398.5h2M213.5 397.6V400.4M214 399.5h2M215 400.5h2M220 402.5h2M221.5 402.4V410.1M224.5 398.4V405.3M234 390.5h2M235 391.5h2M237 390.5h2M239 390.5h2M240 390.5h2M243.5 385.7V389.7M247 386.5h2M251.5 379.3V382.1M255 377.5h2M256 377.5h2M257 377.5h2M259 376.5h2M260 376.5h2M261 376.5h2M262 377.5h2M263 377.5h2M264 378.5h2M265 378.5h2M272.5 381.5V384.5M273.5 376.6V385.8M275 383.5h2M279 392.5h2M283.5 395.9V404.0M288.5 409.5V412.9M292 418.5h2M297 427.5h2M302 420.5h2M303 420.5h2M305 415.5h2M306 415.5h2M309 416.5h2M311.5 415.6V419.9M313 419.5h2M315 418.5h2M316 417.5h2M325 409.5h2M326.5 407.8V412.0M327 407.5h2M332 403.5h2M334 405.5h2M335.5 405.5V407.7M338.5 408.6V412.3M341.5 404.5V412.8M350 393.5h2M360.5 395.8V398.7M362 395.5h2M363 394.5h2M364 394.5h2M366.5 393.3V400.3M370 394.5h2M373.5 389.3V394.7M374 393.5h2M377 394.5h2M379 395.5h2M381.5 387.5V395.0M382 393.5h2M385 391.5h2M386 391.5h2M387 391.5h2M389 390.5h2M390.5 389.5V391.5M393.5 389.5V392.3M400.5 390.9V393.1M402 391.5h2M403 391.5h2M404.5 390.2V395.2M408 390.5h2M410 391.5h2M412.5 393.0V395.7M418.5 387.0V389.9M427.5 380.6V382.6M429 380.5h2M432.5 379.8V381.9M433 379.5h2M435 380.5h2M437.5 380.6V382.8M438 381.5h2M441.5 378.7V383.8M442.5 382.6V384.8M446.5 388.6V394.0M447 390.5h2M458 399.5h2M463 401.5h2M466.5 399.6V402.4M467 401.5h2M468 401.5h2M471 401.5h2M477 407.5h2M478 407.5h2M479 407.5h2M480 407.5h2M481.5 406.5V408.8M482 408.5h2M484 408.5h2M486 409.5h2M489 408.5h2M490 408.5h2M491 407.5h2M495.5 400.8V402.9M496 402.5h2M503.5 379.6V385.6M506.5 377.0V382.6M508 379.5h2M511.5 376.1V380.1M514.5 373.9V381.1M516 376.5h2M517.5 370.8V376.8M520 373.5h2M521 373.5h2M524 369.5h2M527 368.5h2M529 369.5h2M530 370.5h2M532 367.5h2M538 398.5h2M539.5 395.0V400.4M542 393.5h2M543 394.5h2M544 393.5h2M545 394.5h2M548.5 393.5V395.9M549 395.5h2M550 395.5h2M552 394.5h2M553 395.5h2M554 395.5h2M563 385.5h2M566 384.5h2M570.5 381.2V388.5M572.5 393.9V398.8M576 401.5h2M583 397.5h2M585.5 391.3V395.4M588 392.5h2M589 391.5h2M590.5 386.9V392.0M596.5 375.3V379.6M597.5 377.0V379.3M599 377.5h2M601 376.5h2M603 377.5h2M607 376.5h2M610 377.5h2M617 378.5h2M619 378.5h2M620 378.5h2M621 378.5h2M629 387.5h2M640 393.5h2M644 394.5h2M652 395.5h2M658.5 393.8V397.8M659.5 392.6V396.0M667 405.5h2M668 406.5h2M670.5 405.2V408.8M674 410.5h2M676 419.5h2M677 419.5h2M681 418.5h2M682 417.5h2M683 417.5h2M684.5 417.2V419.8M687 417.5h2M689.5 413.7V418.8M690 417.5h2M692 416.5h2M695.5 409.9V415.2M702 403.5h2M703.5 403.0V406.2M706.5 404.2V407.5M708.5 406.1V409.2M710 408.5h2M713 409.5h2M715.5 404.8V411.9M716.5 408.9V412.2M717 409.5h2M720.5 405.4V412.2M727 404.5h2M730 404.5h2M734 407.5h2M737.5 406.2V411.5M738 409.5h2M741.5 408.9V411.7M742 411.5h2M744.5 411.6V416.8M750 424.5h2M751 425.5h2M754.5 428.2V432.8M758 431.5h2M761 427.5h2M762 427.5h2M765 421.5h2M781.5 412.8V416.2M783 410.5h2M784 410.5h2M785.5 404.3V410.7M786.5 407.3V409.7M789.5 412.1V416.8M790.5 415.8V418.7M800.5 423.1V426.9M802.5 421.5V430.1M805.5 420.8V423.2M806.5 420.0V424.1M810 416.5h2M825 431.5h2M826 431.5h2M834 459.5h2M835 459.5h2M844 471.5h2M847.5 466.8V472.6M850.5 463.9V468.1M853 457.5h2M858 470.5h2M865.5 469.0V472.8M866.5 466.5V470.0M876.5 467.0V471.2M877.5 465.8V471.6M880 465.5h2M881.5 463.4V466.3M884 464.5h2M887.5 451.7V454.4M890.5 435.2V438.8M896.5 437.5V440.7M898.5 440.4V444.1M907 447.5h2M911 444.5h2M912.5 438.3V444.5M915 436.5h2M918 430.5h2M926 426.5h2M933 443.5h2M935.5 438.9V444.6M937 441.5h2M941 439.5h2M943 440.5h2M945.5 438.4V441.4M956 449.5h2M957 448.5h2M958.5 446.6V449.2M967 440.5h2M968 440.5h2M970.5 439.1V442.1M973.5 435.7V437.9M974 436.5h2M984.5 413.2V415.7M985.5 414.7V416.7M987.5 416.1V421.1M989.5 422.2V424.3M992.5 423.3V426.6M994 431.5h2M996 432.5h2M1000 435.5h2M1005 436.5h2M1006 435.5h2M1012 428.5h2M1019.5 414.5V416.9M1021 412.5h2M1023.5 408.2V410.6M1025.5 402.6V409.0M1026.5 400.6V405.6M1029 399.5h2M1036.5 392.0V395.1M1037 393.5h2M1039 395.5h2M1042.5 395.6V397.7M1049 381.5h2M1051 378.5h2M1055 379.5h2M1056 379.5h2M1057 379.5h2M1059 380.5h2M1060 381.5h2M1063.5 379.5V383.3M1065 383.5h2M1066 383.5h2M1069 385.5h2M1071.5 385.1V388.7M1080 392.5h2M1081.5 391.9V393.9M1088 396.5h2M1089.5 396.5V398.9M1092 393.5h2M1094.5 391.0V393.1M1096.5 387.7V392.6M1103 382.5h2M1107 380.5h2M1110 379.5h2M1114 377.5h2M1116 376.5h2M1118 375.5h2M1119 374.5h2M1120 374.5h2M1126 377.5h2M1127 377.5h2M1134.5 390.9V393.7M1140.5 398.8V401.5M1143 403.5h2M1145.5 402.3V407.1M1147 406.5h2M1154 410.5h2M1158 407.5h2M1159.5 406.1V410.1M1161 406.5h2M1163 404.5h2M1165 404.5h2M1168 403.5h2M1174 401.5h2M1177 401.5h2M1178 401.5h2M1179 401.5h2M1182.5 399.3V401.6M1189 395.5h2M1190 395.5h2M1191 395.5h2M1192.5 391.2V397.1M1200 385.5h2M1205 382.5h2M1206.5 381.7V384.0M1212 385.5h2M1217 388.5h2" stroke="#e8e078" stroke-width="1.7" fill="none"/><path d="M10.5 267.6V272.3M11.5 267.6V270.7M12.5 269.7V274.0M13.5 272.9V281.0M15.5 290.0V302.0M19.5 285.7V318.5M21.5 296.5V313.0M27.5 336.2V344.9M34.5 321.4V325.7M40.5 328.6V345.3M42.5 342.8V351.2M44.5 334.8V343.4M59.5 292.5V297.7M60.5 283.9V294.5M61 284.5h2M69.5 307.8V313.6M81.5 317.5V327.4M88.5 322.0V329.6M92.5 321.1V326.5M105.5 318.5V323.3M111 323.5h2M143.5 309.8V326.7M148.5 341.0V349.2M157.5 367.1V378.3M158.5 376.8V387.7M161.5 386.4V390.7M163.5 390.4V393.1M165.5 393.8V397.2M166.5 395.8V399.9M174.5 391.1V398.5M177.5 391.0V395.3M182.5 392.2V394.1M200.5 391.0V393.4M207.5 395.8V398.7M222 405.5h2M236.5 389.9V393.3M241.5 388.8V391.0M244.5 387.0V390.3M249.5 379.6V384.0M254.5 377.0V379.7M269.5 378.3V386.4M290.5 411.6V417.3M293.5 417.6V423.2M296.5 420.8V432.7M319.5 410.4V415.3M320.5 411.0V413.9M333.5 402.0V406.5M346.5 390.8V393.1M368.5 392.5V395.5M371.5 391.9V394.6M376.5 392.2V394.9M395 390.5h2M396 390.5h2M401.5 391.0V393.1M414.5 388.8V392.2M416.5 387.6V390.9M417.5 388.9V391.6M426 381.5h2M439.5 379.1V382.8M444.5 383.0V390.1M449.5 393.2V396.9M452.5 393.7V406.2M454.5 396.8V403.2M455.5 396.8V401.6M456.5 395.6V402.2M459.5 397.7V401.1M461.5 398.4V402.0M485 408.5h2M488.5 408.0V413.2M494.5 400.4V403.7M509.5 377.8V380.3M523.5 369.2V372.8M526.5 368.2V371.6M528.5 366.6V371.8M533.5 365.2V369.9M534.5 365.1V406.4M536.5 393.8V401.9M537.5 398.2V404.4M541.5 393.1V398.4M559 392.5h2M561.5 388.0V390.0M568.5 383.2V391.6M569.5 384.1V389.6M587.5 392.4V396.7M592.5 389.5V392.7M595.5 378.6V380.6M600.5 373.7V377.7M624.5 380.6V384.7M630.5 386.1V390.7M635.5 388.2V392.6M636 390.5h2M648.5 395.5V397.5M661.5 394.4V399.3M663.5 395.4V401.8M664 401.5h2M666.5 401.3V406.5M673 410.5h2M675.5 405.2V419.6M685.5 417.1V419.8M700.5 404.5V407.8M709.5 404.2V409.7M718.5 404.8V409.2M719.5 404.8V411.4M722.5 404.7V407.5M723.5 402.0V405.7M724.5 402.9V405.8M726.5 402.6V407.9M728.5 403.4V406.6M733.5 406.3V410.1M735.5 406.0V408.1M749.5 419.7V431.0M752.5 424.9V426.8M753.5 423.6V430.7M755.5 430.4V435.8M759.5 428.1V431.9M760.5 426.4V429.7M764 422.5h2M768.5 417.9V421.6M788.5 408.0V415.5M791.5 414.8V419.3M811.5 412.6V416.5M813.5 406.8V412.3M818.5 406.6V429.4M819.5 428.2V434.5M821 432.5h2M822.5 428.8V433.5M830.5 438.1V443.0M837.5 455.6V460.1M838.5 457.4V465.1M840.5 464.3V474.6M843.5 468.4V472.4M848.5 464.7V468.7M849.5 464.7V466.9M851.5 459.9V465.6M854.5 456.9V464.8M859.5 470.7V479.1M860.5 477.4V481.0M867.5 466.6V469.3M873.5 448.2V458.4M874.5 454.4V466.1M875.5 464.5V472.5M889.5 437.4V448.2M891.5 436.0V439.6M895.5 437.2V441.1M897.5 437.8V442.1M899.5 442.2V446.0M900.5 443.2V446.0M903.5 445.9V450.9M909.5 443.8V448.6M910.5 443.7V448.4M913.5 438.4V444.6M914.5 436.7V442.9M917.5 430.1V436.3M919.5 420.9V430.8M921.5 415.4V421.0M923.5 419.4V424.8M928.5 435.4V450.6M932.5 442.9V447.4M940.5 436.6V441.3M946.5 440.3V443.1M947.5 439.2V447.8M951.5 444.9V448.4M954.5 445.2V449.4M961.5 440.6V445.3M962.5 440.3V443.7M969.5 439.1V442.1M977.5 431.8V437.9M978 434.5h2M983 413.5h2M990.5 423.3V428.5M993.5 423.4V433.1M995.5 430.8V433.6M999.5 427.3V437.7M1007.5 435.1V439.6M1009.5 436.0V439.5M1016 419.5h2M1031.5 393.3V398.7M1044.5 393.1V397.7M1052.5 377.4V379.9M1053.5 378.9V381.0M1062.5 380.7V383.1M1101.5 380.6V383.3M1102.5 380.6V383.1M1105 381.5h2M1112 378.5h2M1125.5 376.3V378.7M1131.5 382.9V390.5M1132.5 389.3V393.3M1153.5 408.5V411.1M1157.5 407.2V409.6M1162.5 404.2V406.9M1180.5 398.6V402.0M1181 400.5h2M1188.5 395.4V398.1M1198.5 385.8V390.4M1203.5 378.7V383.3M1209.5 385.7V398.2M1214.5 385.8V391.0M1220.5 388.7V393.3M1230.5 372.2V385.4" stroke="#1e7cf0" stroke-width="1.7" fill="none"/><path d="M16.5 298.8V310.1M18.5 313.9V332.1M20.5 291.2V299.0M29 334.5h2M30.5 326.4V334.9M31.5 323.8V327.4M36.5 329.4V332.7M37.5 330.4V341.5M38.5 336.3V341.5M43.5 342.4V352.4M46.5 326.1V334.4M47.5 322.5V327.1M48.5 316.9V324.4M53.5 308.5V313.8M54.5 303.9V314.5M62.5 281.6V291.1M66.5 295.4V300.9M86.5 324.7V328.2M98.5 320.5V322.7M113.5 323.2V326.0M124.5 322.6V327.0M137.5 331.1V335.9M138.5 329.5V332.4M144.5 325.6V345.5M145.5 340.9V346.5M150.5 344.9V352.7M154.5 354.1V367.8M164.5 392.0V395.5M170.5 400.5V405.5M173.5 394.5V403.5M175.5 390.5V394.4M179.5 392.3V394.6M181.5 389.5V394.1M183 392.5h2M191 388.5h2M192.5 383.9V392.5M198.5 387.5V392.9M202.5 393.7V396.5M210.5 396.7V398.9M216.5 398.1V404.9M217.5 399.0V401.8M225.5 398.4V400.4M226.5 397.9V401.3M232.5 388.9V392.4M245.5 386.6V390.3M246.5 386.6V394.4M248.5 381.2V387.3M250 379.5h2M252.5 377.7V384.3M253.5 376.8V381.1M267.5 379.2V381.6M270.5 379.0V381.4M286.5 405.7V410.8M289 412.5h2M291.5 416.3V418.9M294.5 410.3V420.2M295.5 418.2V426.2M301.5 420.6V426.3M312.5 417.8V422.4M317.5 415.9V418.1M323 408.5h2M324 409.5h2M328.5 405.8V410.3M330.5 402.4V406.6M336.5 405.9V409.1M342.5 401.3V405.5M343.5 398.1V403.3M345.5 387.1V395.6M348.5 392.0V394.3M354.5 397.8V400.8M355.5 397.2V400.7M361.5 394.9V399.5M365.5 394.5V396.6M375 393.5h2M378 394.5h2M383.5 393.0V395.0M405 390.5h2M407 390.5h2M415.5 388.0V392.5M419.5 385.9V388.6M421 386.5h2M422.5 378.7V386.8M424 382.5h2M431.5 379.2V382.1M440.5 379.1V381.7M448.5 389.8V394.2M450.5 394.6V401.8M453.5 400.2V405.1M462 401.5h2M469.5 399.3V401.8M470.5 399.3V402.3M473 405.5h2M476.5 406.3V408.9M487.5 409.6V413.3M498.5 391.9V393.9M504.5 375.5V380.6M505.5 375.5V378.0M512.5 376.1V378.6M515.5 376.4V382.9M522.5 371.8V373.8M525.5 369.0V371.2M531.5 366.2V371.1M535.5 395.4V406.4M562.5 385.4V390.9M564 385.5h2M577.5 399.1V402.5M581.5 393.4V398.1M594.5 379.6V386.1M605 376.5h2M613.5 375.5V377.9M645.5 390.8V395.4M669 406.5h2M671.5 405.9V408.8M672.5 406.1V410.8M694.5 413.3V417.8M698.5 407.0V412.4M699.5 404.4V408.0M701.5 403.6V407.8M705.5 404.6V407.5M711.5 408.0V411.4M747.5 412.8V421.4M756.5 430.0V434.5M763.5 417.2V433.1M766.5 418.5V422.3M767.5 417.7V421.6M770.5 417.5V420.1M773.5 414.9V419.1M774.5 416.0V418.1M775.5 411.9V418.1M779.5 412.5V414.4M780.5 412.5V416.2M792.5 414.8V419.0M794.5 420.3V422.4M801.5 424.5V426.8M803.5 423.2V425.2M807.5 416.0V424.1M808.5 419.5V421.8M809.5 415.9V421.8M812.5 411.3V413.6M814.5 403.3V407.8M815.5 400.8V405.9M816.5 399.7V404.0M823.5 431.2V433.9M829.5 430.0V442.6M831.5 439.5V445.0M833.5 447.8V460.6M856.5 466.6V471.9M861.5 480.0V484.5M862.5 480.7V484.3M863.5 477.1V484.1M864.5 470.8V478.1M868.5 460.7V469.3M869.5 455.2V464.3M871.5 451.3V461.7M872.5 447.7V452.4M883 463.5h2M892.5 437.6V442.1M893 438.5h2M901.5 439.4V445.3M902.5 444.3V446.9M905.5 446.2V451.5M908.5 443.8V451.3M916.5 433.9V437.1M920.5 420.0V425.2M924.5 423.8V432.6M927.5 423.9V440.1M930.5 447.2V451.5M942.5 438.7V442.4M960.5 443.2V446.6M972.5 436.6V439.7M979.5 432.3V435.1M981.5 417.2V423.3M1001.5 434.2V438.4M1011.5 427.4V436.2M1017.5 414.9V419.9M1018 416.5h2M1024.5 405.2V409.5M1027.5 401.8V407.3M1028.5 399.1V404.1M1030.5 392.5V400.8M1035 392.5h2M1038 394.5h2M1046.5 385.0V391.4M1086 395.5h2M1087.5 393.4V399.0M1091.5 393.4V397.8M1111.5 378.8V381.3M1124.5 376.7V378.7M1130.5 381.9V385.6M1150.5 407.1V410.9M1164 404.5h2M1167 403.5h2M1185.5 397.6V405.1M1197.5 387.3V390.8M1201.5 382.9V393.8M1210.5 385.4V387.7M1213.5 385.3V387.5M1215 388.5h2M1218.5 385.4V391.3M1222.5 391.7V394.9M1223.5 393.3V396.3M1224.5 392.7V399.1" stroke="#ff1414" stroke-width="1.7" fill="none"/><path d="M1230.5 372V403" stroke="#1e7cf0" stroke-width="1.7"/><path d="M1226 401.5h3" stroke="#1e7cf0" stroke-width="2"/><g stroke="#7c7c7c" stroke-width="1" stroke-dasharray="1 1" shape-rendering="crispEdges"><line x1="37.5" y1="520" x2="37.5" y2="669" stroke-dashoffset="0"/><line x1="97.5" y1="520" x2="97.5" y2="669" stroke-dashoffset="0"/><line x1="156.5" y1="520" x2="156.5" y2="669" stroke-dashoffset="0"/><line x1="218.5" y1="520" x2="218.5" y2="669" stroke-dashoffset="0"/><line x1="279.5" y1="520" x2="279.5" y2="669" stroke-dashoffset="0"/><line x1="341.5" y1="520" x2="341.5" y2="669" stroke-dashoffset="0"/><line x1="401.5" y1="520" x2="401.5" y2="669" stroke-dashoffset="0"/><line x1="460.5" y1="520" x2="460.5" y2="669" stroke-dashoffset="0"/><line x1="522.5" y1="520" x2="522.5" y2="669" stroke-dashoffset="0"/><line x1="533.5" y1="520" x2="533.5" y2="669" stroke-dashoffset="0"/><line x1="563.5" y1="520" x2="563.5" y2="669" stroke-dashoffset="0"/><line x1="622.5" y1="520" x2="622.5" y2="669" stroke-dashoffset="0"/><line x1="677.5" y1="520" x2="677.5" y2="669" stroke-dashoffset="0"/><line x1="735.5" y1="520" x2="735.5" y2="669" stroke-dashoffset="0"/><line x1="794.5" y1="520" x2="794.5" y2="669" stroke-dashoffset="0"/><line x1="853.5" y1="520" x2="853.5" y2="669" stroke-dashoffset="0"/><line x1="915.5" y1="520" x2="915.5" y2="669" stroke-dashoffset="0"/><line x1="976.5" y1="520" x2="976.5" y2="669" stroke-dashoffset="0"/><line x1="1035.5" y1="520" x2="1035.5" y2="669" stroke-dashoffset="0"/><line x1="1095.5" y1="520" x2="1095.5" y2="669" stroke-dashoffset="0"/><line x1="1143.5" y1="520" x2="1143.5" y2="669" stroke-dashoffset="0"/><line x1="1184.5" y1="520" x2="1184.5" y2="669" stroke-dashoffset="0"/><line x1="1212.5" y1="520" x2="1212.5" y2="669" stroke-dashoffset="0"/><line x1="1231.5" y1="520" x2="1231.5" y2="669" stroke-dashoffset="0"/></g><g stroke="#a4a4a4" stroke-width="1" stroke-dasharray="1 1" shape-rendering="crispEdges"><line x1="140.5" y1="520" x2="140.5" y2="669" stroke-dashoffset="0"/><line x1="141.5" y1="520" x2="141.5" y2="669" stroke-dashoffset="0"/></g><g stroke="#8c8c8c" stroke-width="1" stroke-dasharray="1 1" stroke-dashoffset="1" shape-rendering="crispEdges"><line x1="7" y1="537.5" x2="1235" y2="537.5"/><line x1="7" y1="571.5" x2="1235" y2="571.5"/><line x1="7" y1="606.5" x2="1235" y2="606.5"/><line x1="7" y1="640.5" x2="1235" y2="640.5"/></g><path d="M9 583V585M10 582V585M11 578V584M12 572V580M13 565V574M14 565V571M15 569V572M16 570V575M17 573V575M18 573V578M19 576V580M20 578V592M21 590V593M22 591V597M23 595V600M24 589V600M25 580V591M26 580V585M27 583V587M28 582V587M29 582V584M30 579V584M31 578V581M32 578V584M33 582V587M34 585V592M35 590V597M36 595V600M37 590V600M38 590V593M39 581V593M40 579V583M41 579V585M42 583V591M43 589V594M44 589V594M45 587V591M46 584V589M47 584V589M48 586V589M49 586V591M50 589V598M51 594V598M52 594V598M53 596V605M54 600V605M55 600V604M56 599V604M57 599V602M58 599V602M59 597V601M60 592V599M61 592V598M62 596V598M63 596V601M64 599V602M65 600V607M66 605V611M67 605V611M68 602V607M69 602V605M70 603V605M71 600V605M72 597V602M73 597V600M74 598V601M75 598V601M76 598V602M77 599V602M78 599V601M79 599V602M80 600V606M81 603V606M82 603V606M83 604V609M84 605V609M85 603V607M86 600V605M87 600V603M88 601V603M89 599V603M90 599V603M91 601V604M92 600V604M93 600V602M94 600V603M95 599V603M96 598V601M97 597V600M98 597V599M99 597V600M100 598V602M101 600V603M102 601V607M103 602V607M104 600V604M105 600V606M106 604V607M107 604V607M108 604V606M109 602V606M110 601V604M111 601V605M112 603V606M113 604V608M114 605V608M115 605V609M116 607V611M117 605V611M118 605V608M119 603V608M120 599V605M121 599V603M122 601V603M123 599V603M124 599V601M125 596V601M126 596V599M127 594V599M128 594V598M129 596V605M130 603V608M131 602V608M132 588V604M133 588V593M134 591V596M135 592V596M136 592V594M137 591V594M138 590V593M139 590V594M140 591V594M141 590V593M142 590V601M143 599V618M144 616V635M145 633V658M146 656V660M147 656V660M148 651V658M149 649V653M150 648V651M151 647V650M152 646V649M153 644V648M154 642V646M155 637V644M156 632V639M157 630V634M158 625V632M159 625V628M160 622V628M161 622V624M162 620V624M163 614V622M164 614V617M165 614V617M166 614V617M167 610V617M168 607V612M169 604V609M170 601V606M171 601V604M172 602V604M173 602V604M174 602V604M175 602V606M176 604V607M177 605V608M178 602V608M179 602V604M180 602V607M181 604V607M182 603V606M183 603V605M184 603V605M185 603V607M186 605V608M187 605V608M188 601V607M189 601V606M190 604V606M191 601V606M192 601V606M193 604V612M194 603V612M195 603V607M196 600V607M197 600V605M198 603V607M199 600V607M200 600V602M201 599V602M202 599V602M203 599V602M204 594V601M205 594V600M206 593V600M207 593V596M208 593V596M209 593V595M210 593V601M211 595V601M212 593V597M213 593V596M214 594V596M215 594V596M216 594V597M217 594V597M218 593V596M219 593V596M220 594V596M221 594V598M222 596V599M223 597V599M224 597V599M225 597V602M226 600V603M227 599V603M228 597V601M229 597V603M230 600V603M231 600V603M232 600V603M233 600V603M234 600V603M235 600V602M236 599V602M237 599V605M238 601V605M239 599V603M240 598V601M241 598V601M242 599V601M243 599V602M244 600V602M245 599V602M246 599V602M247 593V602M248 593V600M249 598V601M250 598V601M251 594V600M252 594V604M253 599V604M254 598V601M255 595V600M256 595V601M257 599V602M258 600V603M259 601V607M260 605V607M261 602V607M262 601V604M263 601V605M264 601V605M265 598V603M266 598V605M267 603V606M268 603V606M269 601V605M270 601V604M271 602V606M272 603V606M273 603V608M274 604V608M275 602V606M276 602V604M277 602V604M278 597V604M279 587V599M280 585V589M281 585V589M282 586V589M283 584V588M284 584V588M285 586V589M286 585V589M287 585V587M288 585V588M289 584V588M290 582V586M291 582V585M292 576V585M293 576V581M294 575V581M295 573V577M296 572V575M297 570V574M298 570V572M299 570V572M300 570V572M301 570V574M302 571V574M303 570V573M304 567V572M305 567V575M306 573V578M307 576V582M308 575V582M309 575V582M310 580V583M311 580V583M312 578V582M313 577V580M314 576V579M315 571V578M316 571V582M317 579V582M318 579V585M319 577V585M320 577V580M321 578V581M322 576V581M323 576V580M324 578V580M325 578V581M326 579V582M327 580V583M328 578V583M329 578V583M330 580V583M331 580V584M332 581V584M333 576V583M334 576V578M335 574V578M336 574V578M337 575V578M338 574V577M339 574V578M340 574V578M341 574V576M342 574V576M343 574V578M344 576V580M345 578V582M346 580V583M347 581V583M348 580V583M349 579V582M350 579V582M351 578V582M352 577V580M353 575V579M354 574V577M355 573V576M356 572V575M357 572V576M358 574V577M359 574V577M360 572V576M361 572V576M362 570V576M363 570V577M364 572V577M365 572V574M366 569V574M367 569V573M368 571V573M369 571V573M370 571V580M371 578V580M372 576V580M373 574V578M374 568V576M375 568V576M376 573V576M377 573V575M378 573V575M379 573V575M380 573V575M381 573V578M382 574V578M383 574V576M384 574V576M385 574V578M386 576V578M387 576V580M388 578V581M389 579V583M390 581V583M391 580V583M392 579V582M393 576V581M394 576V578M395 570V578M396 570V578M397 576V579M398 577V580M399 578V580M400 578V580M401 578V580M402 578V580M403 578V580M404 578V581M405 579V582M406 580V583M407 581V584M408 580V584M409 577V582M410 577V581M411 579V584M412 581V584M413 578V583M414 578V580M415 578V581M416 578V581M417 577V580M418 577V585M419 583V585M420 581V585M421 580V583M422 580V583M423 581V585M424 583V585M425 581V585M426 581V585M427 583V586M428 583V586M429 582V585M430 582V587M431 585V587M432 584V587M433 584V589M434 587V592M435 590V592M436 590V592M437 590V596M438 593V596M439 593V598M440 596V600M441 592V600M442 592V594M443 590V594M444 590V596M445 593V596M446 590V595M447 589V592M448 588V591M449 588V590M450 588V591M451 581V591M452 579V583M453 579V582M454 579V582M455 579V581M456 579V581M457 579V582M458 579V582M459 579V582M460 580V582M461 580V582M462 579V582M463 578V581M464 573V580M465 572V575M466 572V580M467 572V580M468 572V582M469 575V582M470 575V577M471 568V577M472 568V576M473 571V576M474 571V574M475 572V574M476 571V574M477 569V573M478 569V573M479 571V573M480 568V573M481 568V572M482 570V572M483 569V572M484 569V571M485 565V571M486 565V570M487 568V573M488 567V573M489 567V569M490 566V569M491 566V570M492 567V570M493 567V570M494 567V570M495 567V572M496 570V573M497 571V575M498 573V577M499 574V577M500 574V580M501 577V580M502 577V579M503 577V580M504 577V580M505 577V586M506 578V586M507 578V580M508 578V580M509 578V580M510 577V580M511 577V579M512 577V581M513 578V581M514 578V580M515 578V581M516 576V581M517 571V578M518 571V578M519 576V578M520 575V578M521 569V577M522 569V577M523 575V578M524 576V579M525 570V579M526 570V576M527 574V576M528 574V582M529 577V582M530 576V579M531 576V579M532 577V582M533 577V582M534 576V579M535 571V578M536 562V573M537 561V564M538 561V565M539 563V565M540 562V565M541 560V564M542 560V563M543 560V563M544 560V571M545 562V571M546 562V565M547 562V565M548 562V566M549 564V566M550 564V569M551 567V575M552 567V575M553 567V569M554 567V570M555 568V571M556 566V571M557 566V569M558 565V569M559 565V571M560 562V571M561 562V564M562 562V567M563 565V569M564 567V571M565 569V575M566 571V575M567 571V573M568 571V577M569 570V577M570 570V573M571 568V573M572 568V570M573 564V570M574 564V571M575 567V571M576 566V569M577 566V571M578 566V571M579 566V569M580 565V569M581 564V567M582 564V567M583 562V567M584 562V566M585 562V566M586 562V564M587 560V564M588 560V563M589 559V563M590 558V561M591 558V564M592 562V565M593 563V569M594 567V570M595 568V570M596 568V575M597 573V579M598 577V582M599 577V582M600 577V580M601 576V580M602 576V578M603 575V578M604 573V577M605 572V575M606 572V575M607 572V575M608 571V574M609 571V573M610 571V573M611 567V573M612 567V571M613 569V572M614 570V572M615 570V573M616 571V573M617 571V576M618 574V578M619 574V578M620 573V576M621 573V575M622 569V575M623 569V573M624 570V573M625 570V576M626 574V576M627 573V576M628 573V576M629 571V576M630 571V574M631 572V574M632 571V574M633 571V574M634 572V576M635 574V576M636 573V576M637 568V575M638 568V573M639 571V573M640 571V574M641 572V574M642 572V575M643 571V575M644 569V573M645 569V573M646 571V573M647 569V573M648 569V571M649 569V571M650 568V571M651 568V572M652 564V572M653 563V566M654 562V565M655 561V564M656 561V564M657 561V564M658 561V566M659 561V566M660 561V566M661 560V566M662 560V563M663 561V563M664 559V563M665 557V561M666 557V560M667 554V560M668 554V557M669 555V559M670 557V560M671 558V561M672 559V561M673 557V561M674 554V559M675 554V557M676 554V557M677 552V556M678 552V554M679 552V556M680 554V559M681 554V559M682 554V557M683 555V557M684 555V557M685 555V558M686 554V558M687 551V556M688 551V556M689 554V556M690 554V556M691 553V556M692 553V555M693 553V559M694 553V559M695 553V556M696 554V558M697 555V558M698 552V557M699 552V554M700 552V556M701 554V557M702 554V557M703 553V556M704 552V555M705 552V557M706 555V560M707 555V560M708 555V557M709 555V558M710 556V558M711 555V558M712 554V557M713 553V556M714 553V555M715 553V556M716 553V556M717 553V557M718 553V557M719 551V555M720 551V554M721 552V554M722 552V554M723 552V554M724 551V554M725 550V553M726 550V555M727 552V555M728 552V554M729 552V555M730 553V557M731 554V557M732 554V556M733 554V556M734 554V557M735 551V557M736 551V554M737 552V555M738 547V555M739 546V549M740 545V548M741 544V547M742 543V546M743 543V545M744 543V546M745 544V546M746 544V547M747 545V547M748 545V548M749 546V549M750 545V549M751 544V547M752 543V546M753 543V545M754 543V545M755 543V545M756 543V545M757 542V545M758 538V544M759 537V540M760 537V541M761 539V544M762 542V544M763 542V545M764 543V552M765 547V552M766 547V549M767 547V551M768 547V551M769 546V549M770 546V552M771 548V552M772 548V550M773 548V550M774 548V555M775 547V555M776 547V553M777 551V553M778 548V553M779 548V555M780 553V555M781 553V560M782 555V560M783 555V558M784 556V558M785 555V558M786 554V557M787 554V557M788 555V562M789 558V562M790 558V562M791 558V562M792 558V560M793 558V563M794 561V570M795 562V570M796 562V564M797 562V566M798 563V566M799 559V565M800 559V561M801 558V561M802 558V560M803 558V560M804 555V560M805 555V558M806 556V561M807 557V561M808 557V562M809 560V563M810 561V564M811 562V567M812 565V568M813 566V569M814 567V573M815 571V574M816 572V577M817 575V581M818 579V584M819 576V584M820 569V578M821 563V571M822 555V565M823 555V559M824 556V559M825 556V560M826 553V560M827 553V562M828 560V563M829 559V563M830 559V561M831 558V561M832 556V560M833 553V558M834 553V556M835 548V556M836 547V550M837 547V550M838 547V550M839 545V549M840 545V548M841 546V550M842 548V551M843 549V551M844 546V551M845 546V549M846 545V549M847 544V547M848 542V546M849 542V545M850 543V549M851 547V550M852 548V557M853 553V557M854 553V556M855 554V556M856 554V556M857 552V556M858 552V555M859 550V555M860 550V553M861 549V553M862 548V551M863 548V550M864 548V550M865 548V550M866 548V552M867 550V556M868 554V556M869 551V556M870 551V555M871 553V555M872 553V556M873 551V556M874 550V553M875 546V552M876 544V548M877 544V553M878 550V553M879 548V552M880 548V550M881 548V552M882 550V552M883 548V552M884 548V551M885 546V551M886 546V559M887 557V559M888 557V562M889 560V566M890 564V571M891 569V571M892 568V571M893 568V572M894 570V572M895 570V574M896 572V576M897 574V580M898 578V581M899 576V581M900 576V578M901 575V578M902 575V578M903 572V578M904 570V574M905 562V572M906 562V566M907 559V566M908 558V561M909 557V560M910 557V559M911 557V562M912 560V563M913 561V565M914 562V565M915 556V564M916 556V564M917 555V564M918 555V560M919 558V562M920 560V566M921 564V571M922 564V571M923 564V567M924 564V567M925 563V566M926 560V565M927 559V562M928 557V561M929 556V559M930 555V558M931 553V557M932 551V555M933 549V553M934 547V551M935 547V550M936 546V550M937 545V548M938 542V547M939 542V545M940 543V545M941 543V547M942 545V552M943 550V554M944 550V554M945 550V555M946 550V555M947 549V552M948 549V551M949 547V551M950 545V549M951 541V547M952 535V543M953 535V539M954 537V541M955 537V541M956 535V539M957 530V537M958 530V541M959 539V541M960 539V541M961 537V541M962 537V542M963 540V542M964 540V543M965 541V544M966 542V546M967 544V550M968 548V550M969 546V550M970 545V548M971 544V547M972 544V547M973 538V547M974 535V540M975 535V539M976 536V539M977 536V538M978 536V539M979 537V539M980 537V540M981 538V541M982 536V541M983 532V538M984 530V534M985 526V532M986 526V533M987 531V538M988 536V539M989 537V543M990 540V543M991 533V542M992 533V537M993 535V542M994 539V542M995 536V541M996 530V538M997 530V537M998 535V537M999 535V543M1000 532V543M1001 530V534M1002 530V533M1003 530V533M1004 528V532M1005 527V530M1006 527V531M1007 529V532M1008 530V532M1009 530V533M1010 529V533M1011 529V532M1012 530V532M1013 530V536M1014 534V536M1015 534V537M1016 535V539M1017 537V542M1018 540V543M1019 541V545M1020 543V548M1021 546V550M1022 547V550M1023 547V551M1024 549V552M1025 550V552M1026 550V554M1027 551V554M1028 551V554M1029 552V556M1030 552V556M1031 552V555M1032 553V559M1033 557V559M1034 557V560M1035 556V560M1036 556V560M1037 557V560M1038 557V559M1039 555V559M1040 553V557M1041 553V556M1042 554V556M1043 552V556M1044 552V555M1045 552V555M1046 552V555M1047 553V558M1048 556V558M1049 556V562M1050 560V563M1051 560V563M1052 560V566M1053 561V566M1054 561V565M1055 563V566M1056 563V566M1057 563V566M1058 564V567M1059 562V567M1060 562V566M1061 563V566M1062 563V566M1063 559V566M1064 559V565M1065 561V565M1066 561V563M1067 560V563M1068 558V562M1069 558V561M1070 558V561M1071 558V560M1072 558V563M1073 559V563M1074 559V561M1075 559V562M1076 560V563M1077 561V564M1078 562V566M1079 561V566M1080 560V563M1081 557V562M1082 557V560M1083 554V560M1084 554V558M1085 555V558M1086 555V557M1087 555V557M1088 555V558M1089 556V558M1090 556V558M1091 556V558M1092 556V559M1093 557V559M1094 555V559M1095 554V557M1096 554V559M1097 557V560M1098 558V560M1099 558V564M1100 562V564M1101 562V568M1102 566V568M1103 566V568M1104 566V570M1105 567V570M1106 567V572M1107 568V572M1108 568V572M1109 570V573M1110 571V573M1111 571V576M1112 567V576M1113 567V572M1114 569V572M1115 569V573M1116 571V574M1117 569V574M1118 569V571M1119 569V571M1120 568V571M1121 568V571M1122 569V571M1123 565V571M1124 565V567M1125 565V568M1126 564V568M1127 563V566M1128 563V569M1129 567V572M1130 570V575M1131 573V576M1132 574V576M1133 569V576M1134 568V571M1135 564V570M1136 561V566M1137 560V563M1138 559V562M1139 558V561M1140 558V561M1141 559V561M1142 559V562M1143 560V564M1144 562V565M1145 563V565M1146 563V565M1147 560V565M1148 557V562M1149 557V566M1150 563V566M1151 563V566M1152 561V566M1153 561V564M1154 562V567M1155 564V567M1156 562V566M1157 562V566M1158 563V566M1159 563V567M1160 563V567M1161 561V565M1162 561V565M1163 563V568M1164 565V568M1165 565V571M1166 569V573M1167 567V573M1168 567V569M1169 566V569M1170 566V569M1171 567V569M1172 567V570M1173 566V570M1174 563V568M1175 563V571M1176 569V572M1177 570V572M1178 569V572M1179 567V571M1180 566V569M1181 566V569M1182 567V570M1183 568V572M1184 569V572M1185 569V571M1186 569V572M1187 570V572M1188 570V573M1189 571V573M1190 571V575M1191 573V578M1192 574V578M1193 574V579M1194 577V579M1195 574V579M1196 574V580M1197 578V586M1198 580V586M1199 579V582M1200 579V581M1201 579V581M1202 579V582M1203 579V582M1204 576V581M1205 573V578M1206 573V575M1207 573V576M1208 574V578M1209 574V578M1210 574V580M1211 578V581M1212 578V581M1213 578V580M1214 578V582M1215 580V583M1216 578V583M1217 578V582M1218 577V582M1219 576V579M1220 575V578M1221 574V577M1222 574V577M1223 572V577M1224 572V582M1225 572V582M1226 570V574M1227 564V572M1228 562V566M1229 557V564M1230 557V563M1231 559V563M1232 559V561M1233 557V561M1234 557V559" stroke="#ff0000" stroke-width="2" fill="none" shape-rendering="crispEdges"/></svg>
<div class="a" style="left:1236px;top:146px;width:59px;height:21px;background:#d6d6d6"></div>
<div class="a" style="left:1236px;top:392px;width:59px;height:20px;background:#d6d6d6"></div>
<div class="a" style="left:1236px;top:547px;width:59px;height:21px;background:#d6d6d6"></div>
<div class="a" style="left:0;top:0;white-space:pre;line-height:1;font-family:'Liberation Sans',sans-serif;font-size:13px;color:#1a1a1a;transform-origin:0 0;transform:matrix(0.9055,0,0,1.0333,29.09,4.23);will-change:transform">金1分足[2022/08]1.00 - 白金1分足[2022/08]1.00</div>
<div class="a" style="left:0;top:0;white-space:pre;line-height:1;font-family:'Liberation Sans',sans-serif;font-size:13px;color:#1a1a2a;transform-origin:0 0;transform:matrix(1.0636,0,0,1.0273,9.94,26.97);will-change:transform">金</div>
<div class="a" style="left:0;top:0;white-space:pre;line-height:1;font-family:'Liberation Sans',sans-serif;font-size:13px;color:#1a1a2a;transform-origin:0 0;transform:matrix(0.8826,0,0,0.9444,33.52,27.61);will-change:transform">2022/08</div>
<div class="a" style="left:0;top:0;white-space:pre;line-height:1;font-family:'Liberation Sans',sans-serif;font-size:13px;color:#000000;transform-origin:0 0;transform:matrix(0.7500,0,0,1.0333,83.25,25.53);will-change:transform">1.00</div>
<div class="a" style="left:0;top:0;white-space:pre;line-height:1;font-family:'Liberation Sans',sans-serif;font-size:13px;color:#1a1a2a;transform-origin:0 0;transform:matrix(0.9250,0,0,1.0273,142.07,26.97);will-change:transform">白金</div>
<div class="a" style="left:0;top:0;white-space:pre;line-height:1;font-family:'Liberation Sans',sans-serif;font-size:13px;color:#1a1a2a;transform-origin:0 0;transform:matrix(0.8804,0,0,0.9444,176.62,27.61);will-change:transform">2022/08</div>
<div class="a" style="left:0;top:0;white-space:pre;line-height:1;font-family:'Liberation Sans',sans-serif;font-size:13px;color:#000000;transform-origin:0 0;transform:matrix(0.7417,0,0,1.0333,226.46,25.53);will-change:transform">1.00</div>
<div class="a" style="left:0;top:0;white-space:pre;line-height:1;font-family:'Liberation Sans',sans-serif;font-size:13px;color:#1a1a2a;transform-origin:0 0;transform:matrix(0.9500,0,0,1.0273,284.55,26.97);will-change:transform">分足</div>
<div class="a" style="left:0;top:0;white-space:pre;line-height:1;font-family:'Liberation Sans',sans-serif;font-size:13px;color:#000000;transform-origin:0 0;transform:matrix(0.7679,0,0,1.0222,326.53,25.36);will-change:transform">1200</div>
<div class="a" style="left:0;top:0;white-space:pre;line-height:1;font-family:'Liberation Sans',sans-serif;font-size:13px;color:#1a1a2a;transform-origin:0 0;transform:matrix(0.8935,0,0,1.0273,376.11,26.97);will-change:transform">1分足</div>
<div class="a" style="left:0;top:0;white-space:pre;line-height:1;font-family:'Liberation Sans',sans-serif;font-size:12px;color:#c4c4c4;transform-origin:0 0;transform:matrix(1.0455,0,0,1.0545,6.95,47.15);will-change:transform">時刻</div>
<div class="a" style="left:0;top:0;white-space:pre;line-height:1;font-family:'Liberation Mono',monospace;font-size:14px;color:#c4c4c4;transform-origin:0 0;transform:matrix(0.7426,0,0,0.9500,31.87,47.85);will-change:transform">:06:00</div>
<div class="a" style="left:0;top:0;white-space:pre;line-height:1;font-family:'Liberation Sans',sans-serif;font-size:12px;color:#c4c4c4;transform-origin:0 0;transform:matrix(1.0455,0,0,1.0545,74.95,47.15);will-change:transform">始値</div>
<div class="a" style="left:0;top:0;white-space:pre;line-height:1;font-family:'Liberation Mono',monospace;font-size:14px;color:#c4c4c4;transform-origin:0 0;transform:matrix(0.7468,0,0,0.9500,99.46,47.85);will-change:transform">:6,229</div>
<div class="a" style="left:0;top:0;white-space:pre;line-height:1;font-family:'Liberation Sans',sans-serif;font-size:12px;color:#c4c4c4;transform-origin:0 0;transform:matrix(1.0455,0,0,1.0545,142.45,47.15);will-change:transform">高値</div>
<div class="a" style="left:0;top:0;white-space:pre;line-height:1;font-family:'Liberation Mono',monospace;font-size:14px;color:#c4c4c4;transform-origin:0 0;transform:matrix(0.7468,0,0,0.9500,166.96,47.85);will-change:transform">:6,229</div>
<div class="a" style="left:0;top:0;white-space:pre;line-height:1;font-family:'Liberation Sans',sans-serif;font-size:12px;color:#c4c4c4;transform-origin:0 0;transform:matrix(1.0455,0,0,1.0545,210.95,47.15);will-change:transform">安値</div>
<div class="a" style="left:0;top:0;white-space:pre;line-height:1;font-family:'Liberation Mono',monospace;font-size:14px;color:#c4c4c4;transform-origin:0 0;transform:matrix(0.7468,0,0,0.9500,235.26,47.85);will-change:transform">:6,229</div>
<div class="a" style="left:0;top:0;white-space:pre;line-height:1;font-family:'Liberation Sans',sans-serif;font-size:12px;color:#c4c4c4;transform-origin:0 0;transform:matrix(1.0000,0,0,1.0545,279.50,47.15);will-change:transform">終値</div>
<div class="a" style="left:0;top:0;white-space:pre;line-height:1;font-family:'Liberation Mono',monospace;font-size:14px;color:#c4c4c4;transform-origin:0 0;transform:matrix(0.7468,0,0,0.9500,302.96,47.85);will-change:transform">:6,229</div>
<div class="a" style="left:0;top:0;white-space:pre;line-height:1;font-family:'Liberation Sans',sans-serif;font-size:12px;color:#c4c4c4;transform-origin:0 0;transform:matrix(1.0909,0,0,1.0636,7.21,257.14);will-change:transform">時刻</div>
<div class="a" style="left:0;top:0;white-space:pre;line-height:1;font-family:'Liberation Mono',monospace;font-size:14px;color:#c4c4c4;transform-origin:0 0;transform:matrix(0.7191,0,0,0.9500,31.94,257.85);will-change:transform">:06:00</div>
<div class="a" style="left:0;top:0;white-space:pre;line-height:1;font-family:'Liberation Sans',sans-serif;font-size:12px;color:#c4c4c4;transform-origin:0 0;transform:matrix(1.0318,0,0,1.0636,75.47,257.14);will-change:transform">始値</div>
<div class="a" style="left:0;top:0;white-space:pre;line-height:1;font-family:'Liberation Mono',monospace;font-size:14px;color:#c4c4c4;transform-origin:0 0;transform:matrix(0.6966,0,0,0.9500,100.21,257.85);will-change:transform">:---</div>
<div class="a" style="left:0;top:0;white-space:pre;line-height:1;font-family:'Liberation Sans',sans-serif;font-size:12px;color:#c4c4c4;transform-origin:0 0;transform:matrix(1.0318,0,0,1.0636,130.77,257.14);will-change:transform">高値</div>
<div class="a" style="left:0;top:0;white-space:pre;line-height:1;font-family:'Liberation Mono',monospace;font-size:14px;color:#c4c4c4;transform-origin:0 0;transform:matrix(0.7586,0,0,0.9500,154.72,257.85);will-change:transform">:---</div>
<div class="a" style="left:0;top:0;white-space:pre;line-height:1;font-family:'Liberation Sans',sans-serif;font-size:12px;color:#c4c4c4;transform-origin:0 0;transform:matrix(1.0909,0,0,1.0636,185.91,257.14);will-change:transform">安値</div>
<div class="a" style="left:0;top:0;white-space:pre;line-height:1;font-family:'Liberation Mono',monospace;font-size:14px;color:#c4c4c4;transform-origin:0 0;transform:matrix(0.7207,0,0,0.9500,210.64,257.85);will-change:transform">:---</div>
<div class="a" style="left:0;top:0;white-space:pre;line-height:1;font-family:'Liberation Sans',sans-serif;font-size:12px;color:#c4c4c4;transform-origin:0 0;transform:matrix(0.9826,0,0,1.0636,243.00,257.14);will-change:transform">終値</div>
<div class="a" style="left:0;top:0;white-space:pre;line-height:1;font-family:'Liberation Mono',monospace;font-size:14px;color:#c4c4c4;transform-origin:0 0;transform:matrix(0.7448,0,0,0.9500,265.77,257.85);will-change:transform">:---</div>
<div class="a" style="left:0;top:0;white-space:pre;line-height:1;font-family:'Liberation Mono',monospace;font-size:14px;color:#c4c4c4;transform-origin:0 0;transform:matrix(0.7200,0,0,0.9300,7.34,522.07);will-change:transform">[</div>
<div class="a" style="left:0;top:0;white-space:pre;line-height:1;font-family:'Liberation Sans',sans-serif;font-size:12px;color:#c4c4c4;transform-origin:0 0;transform:matrix(0.9000,0,0,1.0091,14.40,520.79);will-change:transform">金</div>
<div class="a" style="left:0;top:0;white-space:pre;line-height:1;font-family:'Liberation Mono',monospace;font-size:14px;color:#c4c4c4;transform-origin:0 0;transform:matrix(0.7050,0,0,0.9300,32.20,522.07);will-change:transform">22/08</div>
<div class="a" style="left:0;top:0;white-space:pre;line-height:1;font-family:'Liberation Mono',monospace;font-size:14px;color:#c4c4c4;transform-origin:0 0;transform:matrix(0.7225,0,0,0.9300,68.98,522.07);will-change:transform">6,229</div>
<div class="a" style="left:0;top:0;white-space:pre;line-height:1;font-family:'Liberation Sans',sans-serif;font-size:12px;color:#c4c4c4;transform-origin:0 0;transform:matrix(1.6000,0,0,1.0091,100.70,520.79);will-change:transform">×</div>
<div class="a" style="left:0;top:0;white-space:pre;line-height:1;font-family:'Liberation Mono',monospace;font-size:14px;color:#c4c4c4;transform-origin:0 0;transform:matrix(0.7105,0,0,0.9300,113.29,522.07);will-change:transform">1.00]</div>
<div class="a" style="left:0;top:0;white-space:pre;line-height:1;font-family:'Liberation Mono',monospace;font-size:14px;color:#c4c4c4;transform-origin:0 0;transform:matrix(1.7000,0,0,0.9300,142.50,522.07);will-change:transform">-</div>
<div class="a" style="left:0;top:0;white-space:pre;line-height:1;font-family:'Liberation Mono',monospace;font-size:14px;color:#c4c4c4;transform-origin:0 0;transform:matrix(0.7200,0,0,0.9300,156.04,522.07);will-change:transform">[</div>
<div class="a" style="left:0;top:0;white-space:pre;line-height:1;font-family:'Liberation Sans',sans-serif;font-size:12px;color:#c4c4c4;transform-origin:0 0;transform:matrix(0.9773,0,0,1.0091,162.72,520.79);will-change:transform">白金</div>
<div class="a" style="left:0;top:0;white-space:pre;line-height:1;font-family:'Liberation Mono',monospace;font-size:14px;color:#c4c4c4;transform-origin:0 0;transform:matrix(0.7350,0,0,0.9300,191.86,522.07);will-change:transform">22/08</div>
<div class="a" style="left:0;top:0;white-space:pre;line-height:1;font-family:'Liberation Mono',monospace;font-size:14px;color:#c4c4c4;transform-origin:0 0;transform:matrix(0.7225,0,0,0.9300,229.28,522.07);will-change:transform">3,443</div>
<div class="a" style="left:0;top:0;white-space:pre;line-height:1;font-family:'Liberation Sans',sans-serif;font-size:12px;color:#c4c4c4;transform-origin:0 0;transform:matrix(1.6000,0,0,1.0091,260.40,520.79);will-change:transform">×</div>
<div class="a" style="left:0;top:0;white-space:pre;line-height:1;font-family:'Liberation Mono',monospace;font-size:14px;color:#c4c4c4;transform-origin:0 0;transform:matrix(0.6447,0,0,0.9300,274.26,522.07);will-change:transform">1.00]</div>
<div class="a" style="left:0;top:0;white-space:pre;line-height:1;font-family:'Liberation Sans',sans-serif;font-size:12px;color:#c4c4c4;transform-origin:0 0;transform:matrix(1.0174,0,0,1.0091,310.40,520.79);will-change:transform">終値</div>
<div class="a" style="left:0;top:0;white-space:pre;line-height:1;font-family:'Liberation Sans',sans-serif;font-size:12px;color:#c4c4c4;transform-origin:0 0;transform:matrix(1.0591,0,0,1.0091,340.74,520.79);will-change:transform">時刻</div>
<div class="a" style="left:0;top:0;white-space:pre;line-height:1;font-family:'Liberation Mono',monospace;font-size:14px;color:#c4c4c4;transform-origin:0 0;transform:matrix(0.7170,0,0,0.9300,364.85,522.07);will-change:transform">:06:00</div>
<div class="a" style="left:0;top:0;white-space:pre;line-height:1;font-family:'Liberation Mono',monospace;font-size:14px;color:#c4c4c4;transform-origin:0 0;transform:matrix(0.7225,0,0,0.9300,408.58,522.07);will-change:transform">2,786</div>
<div class="a" style="left:0;top:0;white-space:pre;line-height:1;font-family:'Liberation Mono',monospace;font-size:14px;color:#bdbdbd;transform-origin:0 0;transform:matrix(0.7575,0,0,0.9500,1236.24,64.55);will-change:transform">6,275</div>
<div class="a" style="left:0;top:0;white-space:pre;line-height:1;font-family:'Liberation Mono',monospace;font-size:14px;color:#bdbdbd;transform-origin:0 0;transform:matrix(0.7575,0,0,0.9000,1236.24,108.10);will-change:transform">6,250</div>
<div class="a" style="left:0;top:0;white-space:pre;line-height:1;font-family:'Liberation Mono',monospace;font-size:14px;color:#bdbdbd;transform-origin:0 0;transform:matrix(0.7575,0,0,0.9000,1236.24,193.10);will-change:transform">6,200</div>
<div class="a" style="left:0;top:0;white-space:pre;line-height:1;font-family:'Liberation Mono',monospace;font-size:14px;color:#bdbdbd;transform-origin:0 0;transform:matrix(0.7575,0,0,0.9500,1236.24,235.35);will-change:transform">6,175</div>
<div class="a" style="left:0;top:0;white-space:pre;line-height:1;font-family:'Liberation Mono',monospace;font-size:14px;font-weight:bold;-webkit-text-stroke:0.3px;color:#000000;transform-origin:0 0;transform:matrix(0.7825,0,0,0.8600,1248.22,150.04);will-change:transform">6,229</div>
<div class="a" style="left:0;top:0;white-space:pre;line-height:1;font-family:'Liberation Mono',monospace;font-size:14px;color:#bdbdbd;transform-origin:0 0;transform:matrix(0.7550,0,0,0.9600,1236.74,278.44);will-change:transform">3,500</div>
<div class="a" style="left:0;top:0;white-space:pre;line-height:1;font-family:'Liberation Mono',monospace;font-size:14px;color:#bdbdbd;transform-origin:0 0;transform:matrix(0.7550,0,0,1.0000,1236.74,326.20);will-change:transform">3,475</div>
<div class="a" style="left:0;top:0;white-space:pre;line-height:1;font-family:'Liberation Mono',monospace;font-size:14px;color:#bdbdbd;transform-origin:0 0;transform:matrix(0.7550,0,0,0.9400,1236.74,375.66);will-change:transform">3,450</div>
<div class="a" style="left:0;top:0;white-space:pre;line-height:1;font-family:'Liberation Mono',monospace;font-size:14px;color:#bdbdbd;transform-origin:0 0;transform:matrix(0.7550,0,0,0.9400,1236.74,423.56);will-change:transform">3,425</div>
<div class="a" style="left:0;top:0;white-space:pre;line-height:1;font-family:'Liberation Mono',monospace;font-size:14px;color:#bdbdbd;transform-origin:0 0;transform:matrix(0.7550,0,0,0.9400,1236.74,471.46);will-change:transform">3,400</div>
<div class="a" style="left:0;top:0;white-space:pre;line-height:1;font-family:'Liberation Mono',monospace;font-size:14px;font-weight:bold;-webkit-text-stroke:0.3px;color:#000000;transform-origin:0 0;transform:matrix(0.7810,0,0,0.8500,1249.00,395.45);will-change:transform">3,443</div>
<div class="a" style="left:0;top:0;white-space:pre;line-height:1;font-family:'Liberation Mono',monospace;font-size:14px;color:#bdbdbd;transform-origin:0 0;transform:matrix(0.7375,0,0,0.8600,1236.76,525.54);will-change:transform">2,800</div>
<div class="a" style="left:0;top:0;white-space:pre;line-height:1;font-family:'Liberation Mono',monospace;font-size:14px;color:#bdbdbd;transform-origin:0 0;transform:matrix(0.7375,0,0,0.9200,1236.76,593.88);will-change:transform">2,750</div>
<div class="a" style="left:0;top:0;white-space:pre;line-height:1;font-family:'Liberation Mono',monospace;font-size:14px;color:#bdbdbd;transform-origin:0 0;transform:matrix(0.7375,0,0,0.8800,1236.76,628.82);will-change:transform">2,725</div>
<div class="a" style="left:0;top:0;white-space:pre;line-height:1;font-family:'Liberation Mono',monospace;font-size:14px;color:#bdbdbd;transform-origin:0 0;transform:matrix(0.7375,0,0,0.8600,1236.76,663.54);will-change:transform">2,700</div>
<div class="a" style="left:0;top:0;white-space:pre;line-height:1;font-family:'Liberation Mono',monospace;font-size:14px;font-weight:bold;-webkit-text-stroke:0.3px;color:#000000;transform-origin:0 0;transform:matrix(0.8150,0,0,0.8400,1247.98,550.36);will-change:transform">2,786</div>
<div class="a" style="left:0;top:0;white-space:pre;line-height:1;font-family:'Liberation Mono',monospace;font-size:14px;color:#bdbdbd;transform-origin:0 0;transform:matrix(0.7467,0,0,0.9200,37.85,234.48);will-change:transform">04</div>
<div class="a" style="left:0;top:0;white-space:pre;line-height:1;font-family:'Liberation Mono',monospace;font-size:14px;color:#bdbdbd;transform-origin:0 0;transform:matrix(0.7467,0,0,0.9200,97.55,234.48);will-change:transform">05</div>
<div class="a" style="left:0;top:0;white-space:pre;line-height:1;font-family:'Liberation Mono',monospace;font-size:14px;color:#bdbdbd;transform-origin:0 0;transform:matrix(0.7467,0,0,0.9200,156.75,234.48);will-change:transform">09</div>
<div class="a" style="left:0;top:0;white-space:pre;line-height:1;font-family:'Liberation Mono',monospace;font-size:14px;color:#bdbdbd;transform-origin:0 0;transform:matrix(0.7467,0,0,0.9200,219.75,234.48);will-change:transform">10</div>
<div class="a" style="left:0;top:0;white-space:pre;line-height:1;font-family:'Liberation Mono',monospace;font-size:14px;color:#bdbdbd;transform-origin:0 0;transform:matrix(0.7467,0,0,0.9200,280.75,234.48);will-change:transform">11</div>
<div class="a" style="left:0;top:0;white-space:pre;line-height:1;font-family:'Liberation Mono',monospace;font-size:14px;color:#bdbdbd;transform-origin:0 0;transform:matrix(0.7467,0,0,0.9200,342.55,234.48);will-change:transform">12</div>
<div class="a" style="left:0;top:0;white-space:pre;line-height:1;font-family:'Liberation Mono',monospace;font-size:14px;color:#bdbdbd;transform-origin:0 0;transform:matrix(0.7467,0,0,0.9200,402.75,234.48);will-change:transform">13</div>
<div class="a" style="left:0;top:0;white-space:pre;line-height:1;font-family:'Liberation Mono',monospace;font-size:14px;color:#bdbdbd;transform-origin:0 0;transform:matrix(0.7467,0,0,0.9200,461.55,234.48);will-change:transform">14</div>
<div class="a" style="left:0;top:0;white-space:pre;line-height:1;font-family:'Liberation Mono',monospace;font-size:14px;color:#bdbdbd;transform-origin:0 0;transform:matrix(0.7467,0,0,0.9200,506.85,234.48);will-change:transform">15</div>
<div class="a" style="left:0;top:0;white-space:pre;line-height:1;font-family:'Liberation Mono',monospace;font-size:14px;color:#bdbdbd;transform-origin:0 0;transform:matrix(0.7467,0,0,0.9200,534.55,234.48);will-change:transform">16</div>
<div class="a" style="left:0;top:0;white-space:pre;line-height:1;font-family:'Liberation Mono',monospace;font-size:14px;color:#bdbdbd;transform-origin:0 0;transform:matrix(0.7467,0,0,0.9200,564.65,234.48);will-change:transform">17</div>
<div class="a" style="left:0;top:0;white-space:pre;line-height:1;font-family:'Liberation Mono',monospace;font-size:14px;color:#bdbdbd;transform-origin:0 0;transform:matrix(0.7467,0,0,0.9200,623.55,234.48);will-change:transform">18</div>
<div class="a" style="left:0;top:0;white-space:pre;line-height:1;font-family:'Liberation Mono',monospace;font-size:14px;color:#bdbdbd;transform-origin:0 0;transform:matrix(0.7467,0,0,0.9200,678.55,234.48);will-change:transform">19</div>
<div class="a" style="left:0;top:0;white-space:pre;line-height:1;font-family:'Liberation Mono',monospace;font-size:14px;color:#bdbdbd;transform-origin:0 0;transform:matrix(0.7467,0,0,0.9200,735.75,234.48);will-change:transform">20</div>
<div class="a" style="left:0;top:0;white-space:pre;line-height:1;font-family:'Liberation Mono',monospace;font-size:14px;color:#bdbdbd;transform-origin:0 0;transform:matrix(0.7467,0,0,0.9200,795.25,234.48);will-change:transform">21</div>
<div class="a" style="left:0;top:0;white-space:pre;line-height:1;font-family:'Liberation Mono',monospace;font-size:14px;color:#bdbdbd;transform-origin:0 0;transform:matrix(0.7467,0,0,0.9200,853.25,234.48);will-change:transform">22</div>
<div class="a" style="left:0;top:0;white-space:pre;line-height:1;font-family:'Liberation Mono',monospace;font-size:14px;color:#bdbdbd;transform-origin:0 0;transform:matrix(0.7467,0,0,0.9200,915.25,234.48);will-change:transform">23</div>
<div class="a" style="left:0;top:0;white-space:pre;line-height:1;font-family:'Liberation Mono',monospace;font-size:14px;color:#bdbdbd;transform-origin:0 0;transform:matrix(0.7467,0,0,0.9200,975.85,234.48);will-change:transform">00</div>
<div class="a" style="left:0;top:0;white-space:pre;line-height:1;font-family:'Liberation Mono',monospace;font-size:14px;color:#bdbdbd;transform-origin:0 0;transform:matrix(0.7467,0,0,0.9200,1034.85,234.48);will-change:transform">01</div>
<div class="a" style="left:0;top:0;white-space:pre;line-height:1;font-family:'Liberation Mono',monospace;font-size:14px;color:#bdbdbd;transform-origin:0 0;transform:matrix(0.7467,0,0,0.9200,1094.95,234.48);will-change:transform">02</div>
<div class="a" style="left:0;top:0;white-space:pre;line-height:1;font-family:'Liberation Mono',monospace;font-size:14px;color:#bdbdbd;transform-origin:0 0;transform:matrix(0.7467,0,0,0.9200,1143.25,234.48);will-change:transform">03</div>
<div class="a" style="left:0;top:0;white-space:pre;line-height:1;font-family:'Liberation Mono',monospace;font-size:14px;color:#bdbdbd;transform-origin:0 0;transform:matrix(0.7467,0,0,0.9200,1184.25,234.48);will-change:transform">04</div>
<div class="a" style="left:0;top:0;white-space:pre;line-height:1;font-family:'Liberation Mono',monospace;font-size:14px;color:#bdbdbd;transform-origin:0 0;transform:matrix(0.7467,0,0,0.9200,1212.25,234.48);will-change:transform">05</div>
<div class="a" style="left:0;top:0;white-space:pre;line-height:1;font-family:'Liberation Mono',monospace;font-size:14px;font-weight:bold;-webkit-text-stroke:0.3px;color:#d4d4d4;transform-origin:0 0;transform:matrix(0.7133,0,0,0.9200,125.29,234.48);will-change:transform">06</div>
<div class="a" style="left:0;top:0;white-space:pre;line-height:1;font-family:'Liberation Mono',monospace;font-size:14px;color:#bdbdbd;transform-origin:0 0;transform:matrix(0.7200,0,0,0.9200,1218.78,234.48);will-change:transform">6</div>
<div class="a" style="left:0;top:0;white-space:pre;line-height:1;font-family:'Liberation Mono',monospace;font-size:14px;color:#bdbdbd;transform-origin:0 0;transform:matrix(0.7467,0,0,0.9200,37.85,498.08);will-change:transform">04</div>
<div class="a" style="left:0;top:0;white-space:pre;line-height:1;font-family:'Liberation Mono',monospace;font-size:14px;color:#bdbdbd;transform-origin:0 0;transform:matrix(0.7467,0,0,0.9200,97.55,498.08);will-change:transform">05</div>
<div class="a" style="left:0;top:0;white-space:pre;line-height:1;font-family:'Liberation Mono',monospace;font-size:14px;color:#bdbdbd;transform-origin:0 0;transform:matrix(0.7467,0,0,0.9200,156.75,498.08);will-change:transform">09</div>
<div class="a" style="left:0;top:0;white-space:pre;line-height:1;font-family:'Liberation Mono',monospace;font-size:14px;color:#bdbdbd;transform-origin:0 0;transform:matrix(0.7467,0,0,0.9200,219.75,498.08);will-change:transform">10</div>
<div class="a" style="left:0;top:0;white-space:pre;line-height:1;font-family:'Liberation Mono',monospace;font-size:14px;color:#bdbdbd;transform-origin:0 0;transform:matrix(0.7467,0,0,0.9200,280.75,498.08);will-change:transform">11</div>
<div class="a" style="left:0;top:0;white-space:pre;line-height:1;font-family:'Liberation Mono',monospace;font-size:14px;color:#bdbdbd;transform-origin:0 0;transform:matrix(0.7467,0,0,0.9200,342.55,498.08);will-change:transform">12</div>
<div class="a" style="left:0;top:0;white-space:pre;line-height:1;font-family:'Liberation Mono',monospace;font-size:14px;color:#bdbdbd;transform-origin:0 0;transform:matrix(0.7467,0,0,0.9200,402.75,498.08);will-change:transform">13</div>
<div class="a" style="left:0;top:0;white-space:pre;line-height:1;font-family:'Liberation Mono',monospace;font-size:14px;color:#bdbdbd;transform-origin:0 0;transform:matrix(0.7467,0,0,0.9200,461.55,498.08);will-change:transform">14</div>
<div class="a" style="left:0;top:0;white-space:pre;line-height:1;font-family:'Liberation Mono',monospace;font-size:14px;color:#bdbdbd;transform-origin:0 0;transform:matrix(0.7467,0,0,0.9200,506.85,498.08);will-change:transform">15</div>
<div class="a" style="left:0;top:0;white-space:pre;line-height:1;font-family:'Liberation Mono',monospace;font-size:14px;color:#bdbdbd;transform-origin:0 0;transform:matrix(0.7467,0,0,0.9200,534.55,498.08);will-change:transform">16</div>
<div class="a" style="left:0;top:0;white-space:pre;line-height:1;font-family:'Liberation Mono',monospace;font-size:14px;color:#bdbdbd;transform-origin:0 0;transform:matrix(0.7467,0,0,0.9200,564.65,498.08);will-change:transform">17</div>
<div class="a" style="left:0;top:0;white-space:pre;line-height:1;font-family:'Liberation Mono',monospace;font-size:14px;color:#bdbdbd;transform-origin:0 0;transform:matrix(0.7467,0,0,0.9200,623.55,498.08);will-change:transform">18</div>
<div class="a" style="left:0;top:0;white-space:pre;line-height:1;font-family:'Liberation Mono',monospace;font-size:14px;color:#bdbdbd;transform-origin:0 0;transform:matrix(0.7467,0,0,0.9200,678.55,498.08);will-change:transform">19</div>
<div class="a" style="left:0;top:0;white-space:pre;line-height:1;font-family:'Liberation Mono',monospace;font-size:14px;color:#bdbdbd;transform-origin:0 0;transform:matrix(0.7467,0,0,0.9200,735.75,498.08);will-change:transform">20</div>
<div class="a" style="left:0;top:0;white-space:pre;line-height:1;font-family:'Liberation Mono',monospace;font-size:14px;color:#bdbdbd;transform-origin:0 0;transform:matrix(0.7467,0,0,0.9200,795.25,498.08);will-change:transform">21</div>
<div class="a" style="left:0;top:0;white-space:pre;line-height:1;font-family:'Liberation Mono',monospace;font-size:14px;color:#bdbdbd;transform-origin:0 0;transform:matrix(0.7467,0,0,0.9200,853.25,498.08);will-change:transform">22</div>
<div class="a" style="left:0;top:0;white-space:pre;line-height:1;font-family:'Liberation Mono',monospace;font-size:14px;color:#bdbdbd;transform-origin:0 0;transform:matrix(0.7467,0,0,0.9200,915.25,498.08);will-change:transform">23</div>
<div class="a" style="left:0;top:0;white-space:pre;line-height:1;font-family:'Liberation Mono',monospace;font-size:14px;color:#bdbdbd;transform-origin:0 0;transform:matrix(0.7467,0,0,0.9200,975.85,498.08);will-change:transform">00</div>
<div class="a" style="left:0;top:0;white-space:pre;line-height:1;font-family:'Liberation Mono',monospace;font-size:14px;color:#bdbdbd;transform-origin:0 0;transform:matrix(0.7467,0,0,0.9200,1034.85,498.08);will-change:transform">01</div>
<div class="a" style="left:0;top:0;white-space:pre;line-height:1;font-family:'Liberation Mono',monospace;font-size:14px;color:#bdbdbd;transform-origin:0 0;transform:matrix(0.7467,0,0,0.9200,1094.95,498.08);will-change:transform">02</div>
<div class="a" style="left:0;top:0;white-space:pre;line-height:1;font-family:'Liberation Mono',monospace;font-size:14px;color:#bdbdbd;transform-origin:0 0;transform:matrix(0.7467,0,0,0.9200,1143.25,498.08);will-change:transform">03</div>
<div class="a" style="left:0;top:0;white-space:pre;line-height:1;font-family:'Liberation Mono',monospace;font-size:14px;color:#bdbdbd;transform-origin:0 0;transform:matrix(0.7467,0,0,0.9200,1184.25,498.08);will-change:transform">04</div>
<div class="a" style="left:0;top:0;white-space:pre;line-height:1;font-family:'Liberation Mono',monospace;font-size:14px;color:#bdbdbd;transform-origin:0 0;transform:matrix(0.7467,0,0,0.9200,1212.25,498.08);will-change:transform">05</div>
<div class="a" style="left:0;top:0;white-space:pre;line-height:1;font-family:'Liberation Mono',monospace;font-size:14px;font-weight:bold;-webkit-text-stroke:0.3px;color:#d4d4d4;transform-origin:0 0;transform:matrix(0.7133,0,0,0.9200,125.29,498.08);will-change:transform">06</div>
<div class="a" style="left:0;top:0;white-space:pre;line-height:1;font-family:'Liberation Mono',monospace;font-size:14px;color:#bdbdbd;transform-origin:0 0;transform:matrix(0.7200,0,0,0.9200,1218.78,498.08);will-change:transform">6</div>
<div class="a" style="left:0;top:0;white-space:pre;line-height:1;font-family:'Liberation Mono',monospace;font-size:14px;color:#bdbdbd;transform-origin:0 0;transform:matrix(0.7467,0,0,0.9200,37.85,669.58);will-change:transform">04</div>
<div class="a" style="left:0;top:0;white-space:pre;line-height:1;font-family:'Liberation Mono',monospace;font-size:14px;color:#bdbdbd;transform-origin:0 0;transform:matrix(0.7467,0,0,0.9200,97.55,669.58);will-change:transform">05</div>
<div class="a" style="left:0;top:0;white-space:pre;line-height:1;font-family:'Liberation Mono',monospace;font-size:14px;color:#bdbdbd;transform-origin:0 0;transform:matrix(0.7467,0,0,0.9200,156.75,669.58);will-change:transform">09</div>
<div class="a" style="left:0;top:0;white-space:pre;line-height:1;font-family:'Liberation Mono',monospace;font-size:14px;color:#bdbdbd;transform-origin:0 0;transform:matrix(0.7467,0,0,0.9200,219.75,669.58);will-change:transform">10</div>
<div class="a" style="left:0;top:0;white-space:pre;line-height:1;font-family:'Liberation Mono',monospace;font-size:14px;color:#bdbdbd;transform-origin:0 0;transform:matrix(0.7467,0,0,0.9200,280.75,669.58);will-change:transform">11</div>
<div class="a" style="left:0;top:0;white-space:pre;line-height:1;font-family:'Liberation Mono',monospace;font-size:14px;color:#bdbdbd;transform-origin:0 0;transform:matrix(0.7467,0,0,0.9200,342.55,669.58);will-change:transform">12</div>
<div class="a" style="left:0;top:0;white-space:pre;line-height:1;font-family:'Liberation Mono',monospace;font-size:14px;color:#bdbdbd;transform-origin:0 0;transform:matrix(0.7467,0,0,0.9200,402.75,669.58);will-change:transform">13</div>
<div class="a" style="left:0;top:0;white-space:pre;line-height:1;font-family:'Liberation Mono',monospace;font-size:14px;color:#bdbdbd;transform-origin:0 0;transform:matrix(0.7467,0,0,0.9200,461.55,669.58);will-change:transform">14</div>
<div class="a" style="left:0;top:0;white-space:pre;line-height:1;font-family:'Liberation Mono',monospace;font-size:14px;color:#bdbdbd;transform-origin:0 0;transform:matrix(0.7467,0,0,0.9200,506.85,669.58);will-change:transform">15</div>
<div class="a" style="left:0;top:0;white-space:pre;line-height:1;font-family:'Liberation Mono',monospace;font-size:14px;color:#bdbdbd;transform-origin:0 0;transform:matrix(0.7467,0,0,0.9200,534.55,669.58);will-change:transform">16</div>
<div class="a" style="left:0;top:0;white-space:pre;line-height:1;font-family:'Liberation Mono',monospace;font-size:14px;color:#bdbdbd;transform-origin:0 0;transform:matrix(0.7467,0,0,0.9200,564.65,669.58);will-change:transform">17</div>
<div class="a" style="left:0;top:0;white-space:pre;line-height:1;font-family:'Liberation Mono',monospace;font-size:14px;color:#bdbdbd;transform-origin:0 0;transform:matrix(0.7467,0,0,0.9200,623.55,669.58);will-change:transform">18</div>
<div class="a" style="left:0;top:0;white-space:pre;line-height:1;font-family:'Liberation Mono',monospace;font-size:14px;color:#bdbdbd;transform-origin:0 0;transform:matrix(0.7467,0,0,0.9200,678.55,669.58);will-change:transform">19</div>
<div class="a" style="left:0;top:0;white-space:pre;line-height:1;font-family:'Liberation Mono',monospace;font-size:14px;color:#bdbdbd;transform-origin:0 0;transform:matrix(0.7467,0,0,0.9200,735.75,669.58);will-change:transform">20</div>
<div class="a" style="left:0;top:0;white-space:pre;line-height:1;font-family:'Liberation Mono',monospace;font-size:14px;color:#bdbdbd;transform-origin:0 0;transform:matrix(0.7467,0,0,0.9200,795.25,669.58);will-change:transform">21</div>
<div class="a" style="left:0;top:0;white-space:pre;line-height:1;font-family:'Liberation Mono',monospace;font-size:14px;color:#bdbdbd;transform-origin:0 0;transform:matrix(0.7467,0,0,0.9200,853.25,669.58);will-change:transform">22</div>
<div class="a" style="left:0;top:0;white-space:pre;line-height:1;font-family:'Liberation Mono',monospace;font-size:14px;color:#bdbdbd;transform-origin:0 0;transform:matrix(0.7467,0,0,0.9200,915.25,669.58);will-change:transform">23</div>
<div class="a" style="left:0;top:0;white-space:pre;line-height:1;font-family:'Liberation Mono',monospace;font-size:14px;color:#bdbdbd;transform-origin:0 0;transform:matrix(0.7467,0,0,0.9200,975.85,669.58);will-change:transform">00</div>
<div class="a" style="left:0;top:0;white-space:pre;line-height:1;font-family:'Liberation Mono',monospace;font-size:14px;color:#bdbdbd;transform-origin:0 0;transform:matrix(0.7467,0,0,0.9200,1034.85,669.58);will-change:transform">01</div>
<div class="a" style="left:0;top:0;white-space:pre;line-height:1;font-family:'Liberation Mono',monospace;font-size:14px;color:#bdbdbd;transform-origin:0 0;transform:matrix(0.7467,0,0,0.9200,1094.95,669.58);will-change:transform">02</div>
<div class="a" style="left:0;top:0;white-space:pre;line-height:1;font-family:'Liberation Mono',monospace;font-size:14px;color:#bdbdbd;transform-origin:0 0;transform:matrix(0.7467,0,0,0.9200,1143.25,669.58);will-change:transform">03</div>
<div class="a" style="left:0;top:0;white-space:pre;line-height:1;font-family:'Liberation Mono',monospace;font-size:14px;color:#bdbdbd;transform-origin:0 0;transform:matrix(0.7467,0,0,0.9200,1184.25,669.58);will-change:transform">04</div>
<div class="a" style="left:0;top:0;white-space:pre;line-height:1;font-family:'Liberation Mono',monospace;font-size:14px;color:#bdbdbd;transform-origin:0 0;transform:matrix(0.7467,0,0,0.9200,1212.25,669.58);will-change:transform">05</div>
<div class="a" style="left:0;top:0;white-space:pre;line-height:1;font-family:'Liberation Mono',monospace;font-size:14px;font-weight:bold;-webkit-text-stroke:0.3px;color:#d4d4d4;transform-origin:0 0;transform:matrix(0.7133,0,0,0.9200,125.29,669.58);will-change:transform">06</div>
<div class="a" style="left:0;top:0;white-space:pre;line-height:1;font-family:'Liberation Mono',monospace;font-size:14px;color:#bdbdbd;transform-origin:0 0;transform:matrix(0.7200,0,0,0.9200,1218.78,669.58);will-change:transform">6</div>
<div class="a" style="left:0;top:0;white-space:pre;line-height:1;font-family:'Liberation Mono',monospace;font-size:14px;color:#c4c4c4;transform-origin:0 0;transform:matrix(0.7333,0,0,0.9200,141.87,219.68);will-change:transform">24</div>
<div class="a" style="left:0;top:0;white-space:pre;line-height:1;font-family:'Liberation Mono',monospace;font-size:14px;color:#c4c4c4;transform-origin:0 0;transform:matrix(0.7067,0,0,0.9600,976.69,219.44);will-change:transform">25</div>
<div class="a" style="left:0;top:0;white-space:pre;line-height:1;font-family:'Liberation Mono',monospace;font-size:14px;color:#c4c4c4;transform-origin:0 0;transform:matrix(0.7333,0,0,0.9200,141.87,483.08);will-change:transform">24</div>
<div class="a" style="left:0;top:0;white-space:pre;line-height:1;font-family:'Liberation Mono',monospace;font-size:14px;color:#c4c4c4;transform-origin:0 0;transform:matrix(0.7067,0,0,0.9600,976.69,482.84);will-change:transform">25</div>
<div class="a" style="left:0;top:0;white-space:pre;line-height:1;font-family:'Liberation Mono',monospace;font-size:14px;color:#c4c4c4;transform-origin:0 0;transform:matrix(0.7333,0,0,0.9200,141.87,654.08);will-change:transform">24</div>
<div class="a" style="left:0;top:0;white-space:pre;line-height:1;font-family:'Liberation Mono',monospace;font-size:14px;color:#c4c4c4;transform-origin:0 0;transform:matrix(0.7067,0,0,0.9600,976.69,653.84);will-change:transform">25</div>
</body></html>
